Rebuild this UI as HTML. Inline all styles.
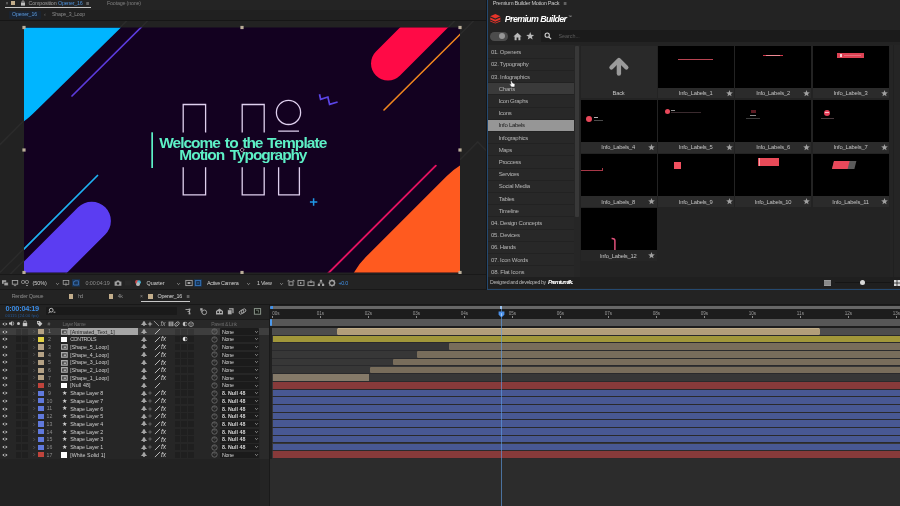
<!DOCTYPE html>
<html><head><meta charset="utf-8"><title>After Effects - Premium Builder</title>
<style>
html,body{margin:0;padding:0;background:#232323;}
body{width:900px;height:506px;overflow:hidden;position:relative;font-family:"Liberation Sans",sans-serif;}
#app{position:absolute;left:0;top:0;width:900px;height:506px;overflow:hidden;background:#232323;will-change:transform;}
#app div,#app span,#app svg{position:absolute;display:block;}
#app span{white-space:nowrap;}
</style></head><body><div id="app">
<div style="left:0px;top:0px;width:487px;height:9.5px;background:#242424;"></div>
<div style="left:0px;top:9.5px;width:487px;height:10.5px;background:#202020;"></div>
<div style="left:0px;top:19.5px;width:487px;height:1px;background:#161616;"></div>
<div style="left:0px;top:20.5px;width:487px;height:253.5px;background:#222222;"></div>
<span style="left:5.50px;top:0px;font-size:5px;line-height:6px;color:#8a8a8a;">×</span>
<div style="left:11.4px;top:0.8px;width:3.8px;height:3.9px;background:#c2ad8b;"></div>
<svg style="left:19.8px;top:-0.2px;" width="6" height="6" viewBox="0 0 6 6">
<rect x="1" y="2.6" width="4" height="3" fill="#bdbdbd"/><path d="M2 2.8V1.8a1 1 0 0 1 2 0V2.8" fill="none" stroke="#bdbdbd" stroke-width=".8"/>
</svg>
<span style="left:28.50px;top:0px;font-size:5.4px;line-height:7px;color:#9c9c9c;letter-spacing:-0.183px;">Composition</span>
<span style="left:58.00px;top:0px;font-size:5.4px;line-height:7px;color:#4d8fd6;letter-spacing:-0.280px;">Opener_16</span>
<span style="left:86.00px;top:0px;font-size:5.5px;line-height:7px;color:#9c9c9c;">≡</span>
<div style="left:4.7px;top:7.3px;width:86px;height:1.2px;background:#c8c8c8;"></div>
<span style="left:107.00px;top:0px;font-size:5.4px;line-height:7px;color:#7e7e7e;letter-spacing:-0.209px;">Footage (none)</span>
<div style="left:9px;top:10.5px;width:32px;height:8px;background:#1a2330;border-radius:1px;"></div>
<span style="left:12.00px;top:11px;font-size:5.2px;line-height:7px;color:#5c9be0;letter-spacing:-0.113px;">Opener_16</span>
<span style="left:44.00px;top:11px;font-size:5.5px;line-height:7px;color:#6a6a6a;">‹</span>
<span style="left:52.00px;top:11px;font-size:5.2px;line-height:7px;color:#8a8a8a;letter-spacing:-0.190px;">Shape_3_Loop</span>
<svg style="left:0px;top:20.5px;" width="487" height="253.5" viewBox="0 20.5 487 253.5">
<defs><clipPath id="cc"><rect x="24" y="27" width="436" height="245"/></clipPath></defs>
<g stroke="#2b2b2b" stroke-width="1.6" fill="none"><path d="M120 27l8-8M24 120l-26 26M141 27l7-7"/><path d="M448 27l8-8M460 34l14-14"/><path d="M24 248l-24 24M24 260l-24 24M67 272l-3 3"/><path d="M460 159.2L477.7 141.5L486.5 150.300"/></g>
<rect x="24" y="27" width="436" height="245" fill="#130120"/>
<g clip-path="url(#cc)">
<path d="M24 27H121L37 109.3Q28.500 117.800 24 120.800Z" fill="#00b5ff"/>
<path d="M141.5 26.5L72 95.5" stroke="#5b3bdb" stroke-width="1.7" stroke-linecap="round"/>
<path d="M388 63L448 3" stroke="#ff0a46" stroke-width="34" stroke-linecap="round"/>
<path d="M460.5 33.5L384 109.5" stroke="#f0861f" stroke-width="1.6" stroke-linecap="round"/>
<path d="M91.7 220.4L11.7 300.4" stroke="#5b3df2" stroke-width="38.4" stroke-linecap="round"/>
<path d="M97.5 175L23 249.5" stroke="#1fb2f2" stroke-width="1.7" stroke-linecap="round"/>
<path d="M435.8 165.2L328 273" stroke="#e0125f" stroke-width="1.9" stroke-linecap="round"/>
<path d="M353.4 273Q358.3 263.9 366 256.3L446.3 176Q454 168.3 461 164.4V273Z" fill="#ff5a1f"/>
<path d="M319.5 93.8L320.6 98.8L327.9 96.5L329.6 103.9L337.6 101.5" fill="none" stroke="#5b45e6" stroke-width="1.7" stroke-linejoin="miter"/>
<g fill="none" stroke="#dfd0ee" stroke-width="1.3"><path d="M183.2 132V104H205.6V132"/><path d="M183.2 166.8V194.4H205.6V166.8"/><path d="M242.2 132V104H264.2V132"/><path d="M242.2 166.8V194.4H264.2V166.8"/><circle cx="288.5" cy="111.9" r="12.1"/><path d="M278.2 130.7H299"/><path d="M278.6 166.8V194.4H299.4V166.8"/></g>
<path d="M313.6 197.8v7.4M309.9 201.5h7.4" stroke="#2098e6" stroke-width="1.5"/>
<rect x="151.3" y="131.8" width="1.7" height="35.7" fill="#5df0c6"/>
</g>
<rect x="22.4" y="25.4" width="3.2" height="3.2" fill="#b9ad98"/>
<rect x="240.4" y="25.4" width="3.2" height="3.2" fill="#b9ad98"/>
<rect x="458.4" y="25.4" width="3.2" height="3.2" fill="#b9ad98"/>
<rect x="22.4" y="147.9" width="3.2" height="3.2" fill="#b9ad98"/>
<rect x="458.4" y="147.9" width="3.2" height="3.2" fill="#b9ad98"/>
<rect x="22.4" y="270.4" width="3.2" height="3.2" fill="#b9ad98"/>
<rect x="240.4" y="270.4" width="3.2" height="3.2" fill="#b9ad98"/>
<rect x="458.4" y="270.4" width="3.2" height="3.2" fill="#b9ad98"/>
<path d="M242.1 147.3l2.200 2.200-2.200 2.200-2.200-2.200z" stroke="#d9bcc6" stroke-width=".8" fill="none"/>
</svg>
<span style="left:159.30px;top:133px;font-size:15.5px;line-height:19px;color:#5df0c6;letter-spacing:-1.038px;font-weight:bold;">Welcome</span>
<span style="left:224.70px;top:133px;font-size:15.5px;line-height:19px;color:#5df0c6;letter-spacing:-0.665px;font-weight:bold;">to</span>
<span style="left:242.50px;top:133px;font-size:15.5px;line-height:19px;color:#5df0c6;letter-spacing:-1.250px;font-weight:bold;">the</span>
<span style="left:266.90px;top:133px;font-size:15.5px;line-height:19px;color:#5df0c6;letter-spacing:-0.925px;font-weight:bold;">Template</span>
<span style="left:179.30px;top:145px;font-size:15.5px;line-height:19px;color:#5df0c6;letter-spacing:-0.981px;font-weight:bold;">Motion</span>
<span style="left:229.80px;top:145px;font-size:15.5px;line-height:19px;color:#5df0c6;letter-spacing:-1.095px;font-weight:bold;">Typography</span>
<div style="left:0px;top:274px;width:487px;height:16px;background:#232323;"></div>
<div style="left:0px;top:273.6px;width:487px;height:1px;background:#191919;"></div>
<svg style="left:1px;top:279.3px;" width="8" height="8" viewBox="0 0 8 8">
<rect x="1" y="1.2" width="4.2" height="3.6" fill="#a2a2a2"/><rect x="3" y="3.2" width="4.2" height="3.6" fill="#a2a2a2" stroke="#232323" stroke-width=".6"/>
</svg>
<svg style="left:10.7px;top:279.3px;" width="8" height="8" viewBox="0 0 8 8">
<rect x="1.3" y="1.5" width="5.4" height="3.7" fill="none" stroke="#a2a2a2" stroke-width=".9"/><path d="M2.8 6.6h2.4" stroke="#a2a2a2" stroke-width=".8"/>
</svg>
<svg style="left:20.6px;top:279.3px;" width="8" height="8" viewBox="0 0 8 8">
<rect x=".6" y="1.6" width="2.9" height="2.8" rx=".8" fill="none" stroke="#a2a2a2" stroke-width=".9"/><rect x="4.5" y="1.6" width="2.9" height="2.8" rx=".8" fill="none" stroke="#a2a2a2" stroke-width=".9"/><path d="M5 6.5h2" stroke="#a2a2a2" stroke-width=".8"/>
</svg>
<span style="left:32.40px;top:280px;font-size:5.4px;line-height:7px;color:#d2d2d2;letter-spacing:0.019px;">(50%)</span>
<svg style="left:54.7px;top:281.5px;" width="5" height="4" viewBox="0 0 5 4">
<path d="M1.2 1.3l1.3 1.3 1.3-1.3" fill="none" stroke="#9a9a9a" stroke-width=".9"/>
</svg>
<svg style="left:62px;top:279.3px;" width="8" height="8" viewBox="0 0 8 8">
<rect x="1.2" y="1.5" width="5.6" height="3.8" fill="none" stroke="#a2a2a2" stroke-width=".8"/><path d="M4 3.4v3.6" stroke="#a2a2a2" stroke-width=".7"/>
</svg>
<svg style="left:72px;top:279.3px;" width="8" height="8" viewBox="0 0 8 8">
<rect x="0" y=".2" width="8" height="7.4" fill="#1a3352"/><path d="M1.6 6V2.6h1.2V1.8h3.6v4.2z" fill="none" stroke="#3d78c2" stroke-width=".8"/>
</svg>
<span style="left:85.60px;top:280px;font-size:5.4px;line-height:7px;color:#8c8c8c;letter-spacing:-0.152px;">0:00:04:19</span>
<svg style="left:114.2px;top:279.3px;" width="8" height="8" viewBox="0 0 8 8">
<path d="M.6 2.4h1.6l.7-1h2.2l.7 1h1.6v4.4H.6z" fill="#a2a2a2"/><circle cx="4" cy="4.5" r="1.3" fill="#232323"/>
</svg>
<svg style="left:124px;top:279.3px;" width="8" height="8" viewBox="0 0 8 8">
<path d="M2 1.5v5M4 1.5v5M6 1.5v5" stroke="#303030" stroke-width=".9"/>
</svg>
<svg style="left:134.4px;top:279.3px;" width="8" height="8" viewBox="0 0 8 8">
<circle cx="3" cy="3" r="1.9" fill="#d04848"/><circle cx="5" cy="3.2" r="1.9" fill="#48b0d0"/><circle cx="4" cy="5.2" r="1.9" fill="#b8b8b8"/>
</svg>
<span style="left:146.60px;top:280px;font-size:5.4px;line-height:7px;color:#d2d2d2;letter-spacing:-0.072px;">Quarter</span>
<svg style="left:176.2px;top:281.5px;" width="5" height="4" viewBox="0 0 5 4">
<path d="M1.2 1.3l1.3 1.3 1.3-1.3" fill="none" stroke="#9a9a9a" stroke-width=".9"/>
</svg>
<svg style="left:184.5px;top:279.3px;" width="8" height="8" viewBox="0 0 8 8">
<rect x=".8" y="1.4" width="6.4" height="5.2" fill="none" stroke="#a2a2a2" stroke-width=".9"/><rect x="2.6" y="3" width="2.8" height="2" fill="#a2a2a2"/>
</svg>
<svg style="left:194.4px;top:279.3px;" width="8" height="8" viewBox="0 0 8 8">
<rect x="0" y=".2" width="8" height="7.6" fill="#18324f"/><rect x="1.3" y="1.6" width="5.4" height="4.8" fill="none" stroke="#3a7cc8" stroke-width=".8"/><path d="M2.5 2.8l3 2.4M5.5 2.8l-3 2.4" stroke="#2f65a5" stroke-width=".5"/>
</svg>
<span style="left:207.00px;top:280px;font-size:5.4px;line-height:7px;color:#d2d2d2;letter-spacing:-0.301px;">Active Camera</span>
<svg style="left:245.5px;top:281.5px;" width="5" height="4" viewBox="0 0 5 4">
<path d="M1.2 1.3l1.3 1.3 1.3-1.3" fill="none" stroke="#9a9a9a" stroke-width=".9"/>
</svg>
<span style="left:257.00px;top:280px;font-size:5.4px;line-height:7px;color:#d2d2d2;letter-spacing:-0.218px;">1 View</span>
<svg style="left:278.9px;top:281.5px;" width="5" height="4" viewBox="0 0 5 4">
<path d="M1.2 1.3l1.3 1.3 1.3-1.3" fill="none" stroke="#9a9a9a" stroke-width=".9"/>
</svg>
<svg style="left:287px;top:279.3px;" width="8" height="8" viewBox="0 0 8 8">
<path d="M1 1.4h1.4M5.6 1.4H7v1.2M1 1.4v1.2" stroke="#a2a2a2" stroke-width=".8" fill="none"/><rect x="2" y="2.8" width="4" height="3.4" fill="none" stroke="#a2a2a2" stroke-width=".9"/>
</svg>
<svg style="left:297px;top:279.3px;" width="8" height="8" viewBox="0 0 8 8">
<rect x="1" y="1.4" width="6" height="5" fill="none" stroke="#a2a2a2" stroke-width=".9"/><path d="M3 2.8v2.4l2.2-1.2z" fill="#a2a2a2"/>
</svg>
<svg style="left:306.8px;top:279.3px;" width="8" height="8" viewBox="0 0 8 8">
<rect x="1" y="3" width="6" height="3.6" fill="none" stroke="#a2a2a2" stroke-width=".9"/><path d="M4 .8v3M2.8 2.4L4 3.8l1.2-1.4" stroke="#a2a2a2" stroke-width=".8" fill="none"/>
</svg>
<svg style="left:316.6px;top:279.3px;" width="8" height="8" viewBox="0 0 8 8">
<rect x="2.9" y=".8" width="2.2" height="2" fill="#a2a2a2"/><rect x=".8" y="5" width="2.2" height="2" fill="#a2a2a2"/><rect x="5" y="5" width="2.2" height="2" fill="#a2a2a2"/><path d="M4 2.8v1.2M1.9 5V4h4.2v1" stroke="#a2a2a2" stroke-width=".7" fill="none"/>
</svg>
<svg style="left:328px;top:279.3px;" width="8" height="8" viewBox="0 0 8 8">
<circle cx="4" cy="4" r="2.5" fill="none" stroke="#a2a2a2" stroke-width="1.3"/><path d="M4 .5v1.2M4 6.3v1.2M.5 4h1.2M6.3 4h1.2M1.5 1.5l.9.9M5.6 5.6l.9.9M6.5 1.5l-.9.9M2.4 5.6l-.9.9" stroke="#a2a2a2" stroke-width=".9"/>
</svg>
<span style="left:338.50px;top:280px;font-size:5.4px;line-height:7px;color:#3f8de0;letter-spacing:-0.290px;">+0.0</span>
<div style="left:0px;top:289.3px;width:900px;height:1px;background:#181818;"></div>
<div style="left:0px;top:290.3px;width:900px;height:13.5px;background:#232323;"></div>
<div style="left:0px;top:303.6px;width:900px;height:1px;background:#181818;"></div>
<span style="left:11.70px;top:293px;font-size:5.4px;line-height:7px;color:#8a8a8a;letter-spacing:-0.319px;">Render Queue</span>
<div style="left:68.6px;top:294px;width:4.8px;height:5px;background:#c2ad8b;"></div>
<span style="left:78.00px;top:293px;font-size:5.4px;line-height:7px;color:#8a8a8a;letter-spacing:-0.703px;">hd</span>
<div style="left:108.6px;top:294px;width:4.8px;height:5px;background:#c2ad8b;"></div>
<span style="left:117.80px;top:293px;font-size:5.4px;line-height:7px;color:#8a8a8a;letter-spacing:-0.552px;">4k</span>
<span style="left:140.00px;top:293px;font-size:5px;line-height:6px;color:#8a8a8a;">×</span>
<div style="left:147.8px;top:294px;width:4.8px;height:5px;background:#c2ad8b;"></div>
<span style="left:157.50px;top:293px;font-size:5.4px;line-height:7px;color:#d6d6d6;letter-spacing:-0.280px;">Opener_16</span>
<span style="left:186.40px;top:293px;font-size:5.5px;line-height:7px;color:#9c9c9c;">≡</span>
<div style="left:141.2px;top:301.1px;width:49px;height:1px;background:#c8c8c8;"></div>
<div style="left:0px;top:304.6px;width:270px;height:15px;background:#232323;"></div>
<span style="left:5.50px;top:304px;font-size:7.4px;line-height:9px;color:#3b8be3;letter-spacing:-0.270px;font-weight:bold;">0:00:04:19</span>
<span style="left:5.30px;top:313px;font-size:4px;line-height:5px;color:#255a9c;letter-spacing:0.144px;">00115 (24.00 fps)</span>
<div style="left:46px;top:306.6px;width:131px;height:8px;background:#1a1a1a;border-radius:1px;"></div>
<svg style="left:47.5px;top:307px;" width="8" height="8" viewBox="0 0 8 8">
<circle cx="3.2" cy="3.2" r="1.9" fill="none" stroke="#c8c8c8" stroke-width=".9"/><path d="M1.9 4.6L.6 6.2M5.6 5.2h1.8" stroke="#c8c8c8" stroke-width=".9"/>
</svg>
<svg style="left:184.2px;top:306.5px;" width="9" height="9" viewBox="0 0 9 9">
<path d="M1.5 2.5h4M5.5 2.5v4M3.5 4.5h2" stroke="#a9a9a9" stroke-width=".9" fill="none"/><rect x="4.6" y="1.6" width="1.8" height="1.8" fill="#a9a9a9"/><rect x="4.6" y="5.6" width="1.8" height="1.8" fill="#a9a9a9"/>
</svg>
<svg style="left:198.9px;top:306.5px;" width="9" height="9" viewBox="0 0 9 9">
<rect x="1.2" y="1.2" width="2.4" height="2.4" fill="#a9a9a9"/><circle cx="5.3" cy="5.3" r="2.3" fill="none" stroke="#a9a9a9" stroke-width=".9"/><path d="M2.4 3.6v1.6h.8" stroke="#a9a9a9" stroke-width=".7" fill="none"/>
</svg>
<svg style="left:214.5px;top:306.5px;" width="9" height="9" viewBox="0 0 9 9">
<path d="M1 4L4.5 1.4 8 4v3.4H1z" fill="#a9a9a9"/><rect x="2.2" y="4.4" width="1.8" height="1.6" fill="#232323"/><rect x="5" y="4.4" width="1.8" height="1.6" fill="#232323"/>
</svg>
<svg style="left:226.1px;top:306.5px;" width="9" height="9" viewBox="0 0 9 9">
<rect x="3" y="1.2" width="4.6" height="5" fill="#a9a9a9"/><rect x="1.4" y="2.8" width="4.6" height="5" fill="#a9a9a9" stroke="#232323" stroke-width=".7"/>
</svg>
<svg style="left:238.3px;top:306.5px;" width="9" height="9" viewBox="0 0 9 9">
<ellipse cx="3.5" cy="5" rx="2.6" ry="1.7" transform="rotate(-35 3.5 5)" fill="none" stroke="#a9a9a9" stroke-width=".9"/><ellipse cx="5.5" cy="4" rx="2.6" ry="1.7" transform="rotate(-35 5.5 4)" fill="none" stroke="#a9a9a9" stroke-width=".9"/>
</svg>
<svg style="left:253.4px;top:306.5px;" width="9" height="9" viewBox="0 0 9 9">
<rect x="1.4" y="1.6" width="6.2" height="5.6" fill="#161a16" stroke="#8a948a" stroke-width="1"/><path d="M3 3.2h2.4v2.4" stroke="#8a948a" stroke-width=".7" fill="none"/>
</svg>
<div style="left:0px;top:319.4px;width:270px;height:1px;background:#1b1b1b;"></div>
<div style="left:0px;top:320.2px;width:270px;height:7.6px;background:#282828;"></div>
<svg style="left:1.8px;top:321.7px;" width="5.8" height="4.2" viewBox="0 0 7 5">
<path d="M.3 2.5Q3.5-.6 6.7 2.5Q3.5 5.6 .3 2.5z" fill="#c4c4c4"/><circle cx="3.5" cy="2.5" r="1.2" fill="#262626"/>
</svg>
<svg style="left:8.2px;top:320.3px;" width="7" height="7" viewBox="0 0 7 7">
<path d="M1 2.6h1.4L4.2 1v5L2.4 4.4H1z" fill="#c4c4c4"/><path d="M5 1.6q1.4 1.9 0 3.8" stroke="#c4c4c4" stroke-width=".7" fill="none"/>
</svg>
<div style="left:16.7px;top:322.3px;width:3px;height:3px;border-radius:2px;background:#c4c4c4"></div>
<svg style="left:22px;top:320.3px;" width="6" height="7" viewBox="0 0 6 7">
<rect x=".8" y="3" width="4.4" height="3.2" fill="#c4c4c4"/><path d="M1.8 3.2V2a1.2 1.2 0 0 1 2.4 0V3.2" fill="none" stroke="#c4c4c4" stroke-width=".8"/>
</svg>
<svg style="left:36px;top:320.3px;" width="7" height="7" viewBox="0 0 7 7">
<path d="M1 1h2.8L6.4 3.8 3.8 6.4 1 3.6z" fill="#c4c4c4"/><circle cx="2.3" cy="2.3" r=".6" fill="#282828"/>
</svg>
<span style="left:47.40px;top:321px;font-size:5px;line-height:6px;color:#7a7a7a;">#</span>
<span style="left:62.60px;top:321px;font-size:5px;line-height:6px;color:#6a6a6a;letter-spacing:-0.463px;">Layer Name</span>
<svg style="left:140.6px;top:321.2px;" width="6" height="5.2" viewBox="0 0 6 5.2">
<path d="M3 .3q1.3 0 1.3 1.4 0 .8 1.4 1.6v.6H.3v-.6q1.4-.8 1.4-1.6Q1.7.3 3 .3z" fill="#a6a6a6"/><path d="M2 4.5h2" stroke="#a6a6a6" stroke-width=".8"/>
</svg>
<svg style="left:147.2px;top:320.8px;" width="6" height="6" viewBox="0 0 6 6">
<path d="M3 .3l.8 1.9 1.9.8-1.9.8L3 5.7l-.8-1.9L.3 3l1.9-.8z" fill="#9a9a9a"/>
</svg>
<svg style="left:153.3px;top:320.3px;" width="7" height="7" viewBox="0 0 7 7">
<path d="M.9 .9L6.1 6.1" stroke="#9a9a9a" stroke-width=".9"/>
</svg>
<span style="left:160.50px;top:320px;font-size:6.6px;line-height:8px;color:#a5a5a5;font-style:italic;font-family:"Liberation Serif",serif;">fx</span>
<svg style="left:167.6px;top:320.8px;" width="6" height="6" viewBox="0 0 6 6">
<rect x=".6" y=".6" width="4.8" height="4.6" fill="#a8a8a8"/><path d="M2.2 .6v4.6M3.8 .6v4.6" stroke="#282828" stroke-width=".5"/>
</svg>
<svg style="left:174.3px;top:320.8px;" width="6" height="6" viewBox="0 0 6 6">
<ellipse cx="3" cy="3" rx="2.6" ry="1.6" transform="rotate(-40 3 3)" fill="none" stroke="#a8a8a8" stroke-width=".9"/><path d="M1.8 4.4L4.2 1.6" stroke="#a8a8a8" stroke-width=".5"/>
</svg>
<svg style="left:181.5px;top:320.8px;" width="6" height="6" viewBox="0 0 6 6">
<circle cx="3" cy="3" r="2.3" fill="#c4c4c4"/><path d="M3.2 1.2a1.8 1.8 0 0 1 0 3.6z" fill="#262626"/>
</svg>
<svg style="left:188.3px;top:320.8px;" width="6" height="6" viewBox="0 0 6 6">
<path d="M.8 2L3 .8 5.200 2v2.600L3 5.600 .8 4.600z" fill="none" stroke="#a8a8a8" stroke-width=".8"/><path d="M.8 2l2.200 1L5.200 2M3 3v2.600" stroke="#a8a8a8" stroke-width=".5" fill="none"/>
</svg>
<span style="left:211.20px;top:321px;font-size:5px;line-height:6px;color:#6a6a6a;letter-spacing:-0.340px;">Parent &amp; Link</span>
<div style="left:0px;top:327.8px;width:270px;height:131px;background:#262626;"></div>
<div style="left:260.4px;top:320.2px;width:8.6px;height:138.6px;background:#2a2a2a;"></div>
<div style="left:269px;top:304.6px;width:1.4px;height:202px;background:#1a1a1a;"></div>
<div style="left:0px;top:458.8px;width:260.4px;height:47.2px;background:#222222;"></div>
<div style="left:260.4px;top:458.8px;width:8.6px;height:47.2px;background:#242424;"></div>
<div style="left:0px;top:328.05px;width:269px;height:7.1px;background:#3e3e3e;"></div>
<div style="left:15.7px;top:328.55px;width:5.5px;height:6.1px;background:#343434;"></div>
<div style="left:22.3px;top:328.55px;width:5.5px;height:6.1px;background:#343434;"></div>
<div style="left:174.7px;top:328.55px;width:5.6px;height:6.1px;background:#353535;"></div>
<div style="left:181.4px;top:328.55px;width:5.6px;height:6.1px;background:#353535;"></div>
<div style="left:188.1px;top:328.55px;width:5.6px;height:6.1px;background:#353535;"></div>
<svg style="left:1.8px;top:329.5px;" width="5.8" height="4.2" viewBox="0 0 7 5">
<path d="M.3 2.5Q3.5-.6 6.7 2.5Q3.5 5.6 .3 2.5z" fill="#c6c6c6"/><circle cx="3.5" cy="2.5" r="1.2" fill="#262626"/>
</svg>
<svg style="left:32.4px;top:329.1px;" width="4" height="5" viewBox="0 0 4 5">
<path d="M1.5 1.2L2.7 2.5 1.5 3.8" fill="none" stroke="#636363" stroke-width=".8"/>
</svg>
<div style="left:38.2px;top:329px;width:5.7px;height:5.2px;background:#b5a285;"></div>
<span style="left:47.95px;top:328px;font-size:5.2px;line-height:7px;color:#8c8c8c;">1</span>
<svg style="left:61px;top:328.7px;" width="7" height="6" viewBox="0 0 7 6">
<rect x="0" y="0" width="6.8" height="5.8" fill="#a9a9a9"/><rect x="1.2" y="1.4" width="4.4" height="3.2" fill="#3a3a3a"/><rect x="2.6" y="2.4" width="2.4" height="1.8" fill="#a9a9a9"/>
</svg>
<div style="left:68.4px;top:328.25px;width:69.8px;height:6.7px;background:#a6a6a6;"></div>
<span style="left:70.20px;top:329px;font-size:5.3px;line-height:7px;color:#1e1e1e;letter-spacing:0.035px;">[Animated_Text_1]</span>
<svg style="left:140.6px;top:329px;" width="6" height="5.2" viewBox="0 0 6 5.2">
<path d="M3 .3q1.3 0 1.3 1.4 0 .8 1.4 1.6v.6H.3v-.6q1.4-.8 1.4-1.6Q1.7.3 3 .3z" fill="#a6a6a6"/><path d="M2 4.5h2" stroke="#a6a6a6" stroke-width=".8"/>
</svg>
<svg style="left:153.7px;top:328.1px;" width="7" height="7" viewBox="0 0 7 7">
<path d="M.9 6.1L6.1 .9" stroke="#c9c9c9" stroke-width=".9"/>
</svg>
<svg style="left:210.8px;top:328.1px;" width="7" height="7" viewBox="0 0 7 7">
<circle cx="3.5" cy="3.5" r="2.7" fill="none" stroke="#6e6e6e" stroke-width=".8"/><path d="M3.5 3.5q1.2-.9 .4-1.7-1.4-.6-2 .9" fill="none" stroke="#6e6e6e" stroke-width=".6"/>
</svg>
<div style="left:219.8px;top:328.45px;width:39.6px;height:6.3px;background:#1b1b1b;border-radius:1px;"></div>
<span style="left:222.00px;top:329px;font-size:5.3px;line-height:7px;color:#d4d4d4;letter-spacing:-0.218px;">None</span>
<svg style="left:253.5px;top:329.6px;" width="5" height="4" viewBox="0 0 5 4">
<path d="M1.2 1.3l1.3 1.3 1.3-1.3" fill="none" stroke="#a0a0a0" stroke-width=".9"/>
</svg>
<div style="left:15.7px;top:336.25px;width:5.5px;height:6.1px;background:#1f1f1f;"></div>
<div style="left:22.3px;top:336.25px;width:5.5px;height:6.1px;background:#1f1f1f;"></div>
<div style="left:174.7px;top:336.25px;width:5.6px;height:6.1px;background:#1f1f1f;"></div>
<div style="left:181.4px;top:336.25px;width:5.6px;height:6.1px;background:#1f1f1f;"></div>
<div style="left:188.1px;top:336.25px;width:5.6px;height:6.1px;background:#1f1f1f;"></div>
<svg style="left:1.8px;top:337.2px;" width="5.8" height="4.2" viewBox="0 0 7 5">
<path d="M.3 2.5Q3.5-.6 6.7 2.5Q3.5 5.6 .3 2.5z" fill="#c6c6c6"/><circle cx="3.5" cy="2.5" r="1.2" fill="#262626"/>
</svg>
<svg style="left:32.4px;top:336.8px;" width="4" height="5" viewBox="0 0 4 5">
<path d="M1.5 1.2L2.7 2.5 1.5 3.8" fill="none" stroke="#636363" stroke-width=".8"/>
</svg>
<div style="left:38.2px;top:336.7px;width:5.7px;height:5.2px;background:#e2d244;"></div>
<span style="left:47.95px;top:336px;font-size:5.2px;line-height:7px;color:#8c8c8c;">2</span>
<div style="left:61.2px;top:336.5px;width:6.2px;height:5.6px;background:#ffffff;"></div>
<span style="left:70.20px;top:336px;font-size:5.3px;line-height:7px;color:#cfcfcf;letter-spacing:-0.431px;">CONTROLS</span>
<svg style="left:140.6px;top:336.7px;" width="6" height="5.2" viewBox="0 0 6 5.2">
<path d="M3 .3q1.3 0 1.3 1.4 0 .8 1.4 1.6v.6H.3v-.6q1.4-.8 1.4-1.6Q1.7.3 3 .3z" fill="#a6a6a6"/><path d="M2 4.5h2" stroke="#a6a6a6" stroke-width=".8"/>
</svg>
<svg style="left:153.7px;top:335.8px;" width="7" height="7" viewBox="0 0 7 7">
<path d="M.9 6.1L6.1 .9" stroke="#c9c9c9" stroke-width=".9"/>
</svg>
<span style="left:161.00px;top:335px;font-size:6.6px;line-height:8px;color:#d0d0d0;font-style:italic;font-family:"Liberation Serif",serif;">fx</span>
<svg style="left:181.5px;top:336.3px;" width="6" height="6" viewBox="0 0 6 6">
<circle cx="3" cy="3" r="2.3" fill="#e8e8e8"/><path d="M3.2 1.2a1.8 1.8 0 0 1 0 3.6z" fill="#262626"/>
</svg>
<svg style="left:210.8px;top:335.8px;" width="7" height="7" viewBox="0 0 7 7">
<circle cx="3.5" cy="3.5" r="2.7" fill="none" stroke="#6e6e6e" stroke-width=".8"/><path d="M3.5 3.5q1.2-.9 .4-1.7-1.4-.6-2 .9" fill="none" stroke="#6e6e6e" stroke-width=".6"/>
</svg>
<div style="left:219.8px;top:336.15px;width:39.6px;height:6.3px;background:#1b1b1b;border-radius:1px;"></div>
<span style="left:222.00px;top:336px;font-size:5.3px;line-height:7px;color:#d4d4d4;letter-spacing:-0.218px;">None</span>
<svg style="left:253.5px;top:337.3px;" width="5" height="4" viewBox="0 0 5 4">
<path d="M1.2 1.3l1.3 1.3 1.3-1.3" fill="none" stroke="#a0a0a0" stroke-width=".9"/>
</svg>
<div style="left:15.7px;top:343.95px;width:5.5px;height:6.1px;background:#1f1f1f;"></div>
<div style="left:22.3px;top:343.95px;width:5.5px;height:6.1px;background:#1f1f1f;"></div>
<div style="left:174.7px;top:343.95px;width:5.6px;height:6.1px;background:#1f1f1f;"></div>
<div style="left:181.4px;top:343.95px;width:5.6px;height:6.1px;background:#1f1f1f;"></div>
<div style="left:188.1px;top:343.95px;width:5.6px;height:6.1px;background:#1f1f1f;"></div>
<svg style="left:1.8px;top:344.9px;" width="5.8" height="4.2" viewBox="0 0 7 5">
<path d="M.3 2.5Q3.5-.6 6.7 2.5Q3.5 5.6 .3 2.5z" fill="#c6c6c6"/><circle cx="3.5" cy="2.5" r="1.2" fill="#262626"/>
</svg>
<svg style="left:32.4px;top:344.5px;" width="4" height="5" viewBox="0 0 4 5">
<path d="M1.5 1.2L2.7 2.5 1.5 3.8" fill="none" stroke="#636363" stroke-width=".8"/>
</svg>
<div style="left:38.2px;top:344.4px;width:5.7px;height:5.2px;background:#b5a285;"></div>
<span style="left:47.95px;top:344px;font-size:5.2px;line-height:7px;color:#8c8c8c;">3</span>
<svg style="left:61px;top:344.1px;" width="7" height="6" viewBox="0 0 7 6">
<rect x="0" y="0" width="6.8" height="5.8" fill="#a9a9a9"/><rect x="1.2" y="1.4" width="4.4" height="3.2" fill="#3a3a3a"/><rect x="2.6" y="2.4" width="2.4" height="1.8" fill="#a9a9a9"/>
</svg>
<span style="left:70.20px;top:344px;font-size:5.3px;line-height:7px;color:#cfcfcf;letter-spacing:-0.029px;">[Shape_5_Loop]</span>
<svg style="left:140.6px;top:344.4px;" width="6" height="5.2" viewBox="0 0 6 5.2">
<path d="M3 .3q1.3 0 1.3 1.4 0 .8 1.4 1.6v.6H.3v-.6q1.4-.8 1.4-1.6Q1.7.3 3 .3z" fill="#a6a6a6"/><path d="M2 4.5h2" stroke="#a6a6a6" stroke-width=".8"/>
</svg>
<svg style="left:153.7px;top:343.5px;" width="7" height="7" viewBox="0 0 7 7">
<path d="M.9 6.1L6.1 .9" stroke="#c9c9c9" stroke-width=".9"/>
</svg>
<span style="left:161.00px;top:343px;font-size:6.6px;line-height:8px;color:#d0d0d0;font-style:italic;font-family:"Liberation Serif",serif;">fx</span>
<svg style="left:210.8px;top:343.5px;" width="7" height="7" viewBox="0 0 7 7">
<circle cx="3.5" cy="3.5" r="2.7" fill="none" stroke="#6e6e6e" stroke-width=".8"/><path d="M3.5 3.5q1.2-.9 .4-1.7-1.4-.6-2 .9" fill="none" stroke="#6e6e6e" stroke-width=".6"/>
</svg>
<div style="left:219.8px;top:343.85px;width:39.6px;height:6.3px;background:#1b1b1b;border-radius:1px;"></div>
<span style="left:222.00px;top:344px;font-size:5.3px;line-height:7px;color:#d4d4d4;letter-spacing:-0.218px;">None</span>
<svg style="left:253.5px;top:345px;" width="5" height="4" viewBox="0 0 5 4">
<path d="M1.2 1.3l1.3 1.3 1.3-1.3" fill="none" stroke="#a0a0a0" stroke-width=".9"/>
</svg>
<div style="left:15.7px;top:351.65px;width:5.5px;height:6.1px;background:#1f1f1f;"></div>
<div style="left:22.3px;top:351.65px;width:5.5px;height:6.1px;background:#1f1f1f;"></div>
<div style="left:174.7px;top:351.65px;width:5.6px;height:6.1px;background:#1f1f1f;"></div>
<div style="left:181.4px;top:351.65px;width:5.6px;height:6.1px;background:#1f1f1f;"></div>
<div style="left:188.1px;top:351.65px;width:5.6px;height:6.1px;background:#1f1f1f;"></div>
<svg style="left:1.8px;top:352.6px;" width="5.8" height="4.2" viewBox="0 0 7 5">
<path d="M.3 2.5Q3.5-.6 6.7 2.5Q3.5 5.6 .3 2.5z" fill="#c6c6c6"/><circle cx="3.5" cy="2.5" r="1.2" fill="#262626"/>
</svg>
<svg style="left:32.4px;top:352.2px;" width="4" height="5" viewBox="0 0 4 5">
<path d="M1.5 1.2L2.7 2.5 1.5 3.8" fill="none" stroke="#636363" stroke-width=".8"/>
</svg>
<div style="left:38.2px;top:352.1px;width:5.7px;height:5.2px;background:#b5a285;"></div>
<span style="left:47.95px;top:352px;font-size:5.2px;line-height:7px;color:#8c8c8c;">4</span>
<svg style="left:61px;top:351.8px;" width="7" height="6" viewBox="0 0 7 6">
<rect x="0" y="0" width="6.8" height="5.8" fill="#a9a9a9"/><rect x="1.2" y="1.4" width="4.4" height="3.2" fill="#3a3a3a"/><rect x="2.6" y="2.4" width="2.4" height="1.8" fill="#a9a9a9"/>
</svg>
<span style="left:70.20px;top:352px;font-size:5.3px;line-height:7px;color:#cfcfcf;letter-spacing:-0.029px;">[Shape_4_Loop]</span>
<svg style="left:140.6px;top:352.1px;" width="6" height="5.2" viewBox="0 0 6 5.2">
<path d="M3 .3q1.3 0 1.3 1.4 0 .8 1.4 1.6v.6H.3v-.6q1.4-.8 1.4-1.6Q1.7.3 3 .3z" fill="#a6a6a6"/><path d="M2 4.5h2" stroke="#a6a6a6" stroke-width=".8"/>
</svg>
<svg style="left:153.7px;top:351.2px;" width="7" height="7" viewBox="0 0 7 7">
<path d="M.9 6.1L6.1 .9" stroke="#c9c9c9" stroke-width=".9"/>
</svg>
<span style="left:161.00px;top:351px;font-size:6.6px;line-height:8px;color:#d0d0d0;font-style:italic;font-family:"Liberation Serif",serif;">fx</span>
<svg style="left:210.8px;top:351.2px;" width="7" height="7" viewBox="0 0 7 7">
<circle cx="3.5" cy="3.5" r="2.7" fill="none" stroke="#6e6e6e" stroke-width=".8"/><path d="M3.5 3.5q1.2-.9 .4-1.7-1.4-.6-2 .9" fill="none" stroke="#6e6e6e" stroke-width=".6"/>
</svg>
<div style="left:219.8px;top:351.55px;width:39.6px;height:6.3px;background:#1b1b1b;border-radius:1px;"></div>
<span style="left:222.00px;top:352px;font-size:5.3px;line-height:7px;color:#d4d4d4;letter-spacing:-0.218px;">None</span>
<svg style="left:253.5px;top:352.7px;" width="5" height="4" viewBox="0 0 5 4">
<path d="M1.2 1.3l1.3 1.3 1.3-1.3" fill="none" stroke="#a0a0a0" stroke-width=".9"/>
</svg>
<div style="left:15.7px;top:359.35px;width:5.5px;height:6.1px;background:#1f1f1f;"></div>
<div style="left:22.3px;top:359.35px;width:5.5px;height:6.1px;background:#1f1f1f;"></div>
<div style="left:174.7px;top:359.35px;width:5.6px;height:6.1px;background:#1f1f1f;"></div>
<div style="left:181.4px;top:359.35px;width:5.6px;height:6.1px;background:#1f1f1f;"></div>
<div style="left:188.1px;top:359.35px;width:5.6px;height:6.1px;background:#1f1f1f;"></div>
<svg style="left:1.8px;top:360.3px;" width="5.8" height="4.2" viewBox="0 0 7 5">
<path d="M.3 2.5Q3.5-.6 6.7 2.5Q3.5 5.6 .3 2.5z" fill="#c6c6c6"/><circle cx="3.5" cy="2.5" r="1.2" fill="#262626"/>
</svg>
<svg style="left:32.4px;top:359.9px;" width="4" height="5" viewBox="0 0 4 5">
<path d="M1.5 1.2L2.7 2.5 1.5 3.8" fill="none" stroke="#636363" stroke-width=".8"/>
</svg>
<div style="left:38.2px;top:359.8px;width:5.7px;height:5.2px;background:#b5a285;"></div>
<span style="left:47.95px;top:359px;font-size:5.2px;line-height:7px;color:#8c8c8c;">5</span>
<svg style="left:61px;top:359.5px;" width="7" height="6" viewBox="0 0 7 6">
<rect x="0" y="0" width="6.8" height="5.8" fill="#a9a9a9"/><rect x="1.2" y="1.4" width="4.4" height="3.2" fill="#3a3a3a"/><rect x="2.6" y="2.4" width="2.4" height="1.8" fill="#a9a9a9"/>
</svg>
<span style="left:70.20px;top:359px;font-size:5.3px;line-height:7px;color:#cfcfcf;letter-spacing:-0.029px;">[Shape_3_Loop]</span>
<svg style="left:140.6px;top:359.8px;" width="6" height="5.2" viewBox="0 0 6 5.2">
<path d="M3 .3q1.3 0 1.3 1.4 0 .8 1.4 1.6v.6H.3v-.6q1.4-.8 1.4-1.6Q1.7.3 3 .3z" fill="#a6a6a6"/><path d="M2 4.5h2" stroke="#a6a6a6" stroke-width=".8"/>
</svg>
<svg style="left:153.7px;top:358.9px;" width="7" height="7" viewBox="0 0 7 7">
<path d="M.9 6.1L6.1 .9" stroke="#c9c9c9" stroke-width=".9"/>
</svg>
<span style="left:161.00px;top:359px;font-size:6.6px;line-height:8px;color:#d0d0d0;font-style:italic;font-family:"Liberation Serif",serif;">fx</span>
<svg style="left:210.8px;top:358.9px;" width="7" height="7" viewBox="0 0 7 7">
<circle cx="3.5" cy="3.5" r="2.7" fill="none" stroke="#6e6e6e" stroke-width=".8"/><path d="M3.5 3.5q1.2-.9 .4-1.7-1.4-.6-2 .9" fill="none" stroke="#6e6e6e" stroke-width=".6"/>
</svg>
<div style="left:219.8px;top:359.25px;width:39.6px;height:6.3px;background:#1b1b1b;border-radius:1px;"></div>
<span style="left:222.00px;top:359px;font-size:5.3px;line-height:7px;color:#d4d4d4;letter-spacing:-0.218px;">None</span>
<svg style="left:253.5px;top:360.4px;" width="5" height="4" viewBox="0 0 5 4">
<path d="M1.2 1.3l1.3 1.3 1.3-1.3" fill="none" stroke="#a0a0a0" stroke-width=".9"/>
</svg>
<div style="left:15.7px;top:367.05px;width:5.5px;height:6.1px;background:#1f1f1f;"></div>
<div style="left:22.3px;top:367.05px;width:5.5px;height:6.1px;background:#1f1f1f;"></div>
<div style="left:174.7px;top:367.05px;width:5.6px;height:6.1px;background:#1f1f1f;"></div>
<div style="left:181.4px;top:367.05px;width:5.6px;height:6.1px;background:#1f1f1f;"></div>
<div style="left:188.1px;top:367.05px;width:5.6px;height:6.1px;background:#1f1f1f;"></div>
<svg style="left:1.8px;top:368px;" width="5.8" height="4.2" viewBox="0 0 7 5">
<path d="M.3 2.5Q3.5-.6 6.7 2.5Q3.5 5.6 .3 2.5z" fill="#c6c6c6"/><circle cx="3.5" cy="2.5" r="1.2" fill="#262626"/>
</svg>
<svg style="left:32.4px;top:367.6px;" width="4" height="5" viewBox="0 0 4 5">
<path d="M1.5 1.2L2.7 2.5 1.5 3.8" fill="none" stroke="#636363" stroke-width=".8"/>
</svg>
<div style="left:38.2px;top:367.5px;width:5.7px;height:5.2px;background:#b5a285;"></div>
<span style="left:47.95px;top:367px;font-size:5.2px;line-height:7px;color:#8c8c8c;">6</span>
<svg style="left:61px;top:367.2px;" width="7" height="6" viewBox="0 0 7 6">
<rect x="0" y="0" width="6.8" height="5.8" fill="#a9a9a9"/><rect x="1.2" y="1.4" width="4.4" height="3.2" fill="#3a3a3a"/><rect x="2.6" y="2.4" width="2.4" height="1.8" fill="#a9a9a9"/>
</svg>
<span style="left:70.20px;top:367px;font-size:5.3px;line-height:7px;color:#cfcfcf;letter-spacing:-0.029px;">[Shape_2_Loop]</span>
<svg style="left:140.6px;top:367.5px;" width="6" height="5.2" viewBox="0 0 6 5.2">
<path d="M3 .3q1.3 0 1.3 1.4 0 .8 1.4 1.6v.6H.3v-.6q1.4-.8 1.4-1.6Q1.7.3 3 .3z" fill="#a6a6a6"/><path d="M2 4.5h2" stroke="#a6a6a6" stroke-width=".8"/>
</svg>
<svg style="left:153.7px;top:366.6px;" width="7" height="7" viewBox="0 0 7 7">
<path d="M.9 6.1L6.1 .9" stroke="#c9c9c9" stroke-width=".9"/>
</svg>
<span style="left:161.00px;top:366px;font-size:6.6px;line-height:8px;color:#d0d0d0;font-style:italic;font-family:"Liberation Serif",serif;">fx</span>
<svg style="left:210.8px;top:366.6px;" width="7" height="7" viewBox="0 0 7 7">
<circle cx="3.5" cy="3.5" r="2.7" fill="none" stroke="#6e6e6e" stroke-width=".8"/><path d="M3.5 3.5q1.2-.9 .4-1.7-1.4-.6-2 .9" fill="none" stroke="#6e6e6e" stroke-width=".6"/>
</svg>
<div style="left:219.8px;top:366.95px;width:39.6px;height:6.3px;background:#1b1b1b;border-radius:1px;"></div>
<span style="left:222.00px;top:367px;font-size:5.3px;line-height:7px;color:#d4d4d4;letter-spacing:-0.218px;">None</span>
<svg style="left:253.5px;top:368.1px;" width="5" height="4" viewBox="0 0 5 4">
<path d="M1.2 1.3l1.3 1.3 1.3-1.3" fill="none" stroke="#a0a0a0" stroke-width=".9"/>
</svg>
<div style="left:15.7px;top:374.75px;width:5.5px;height:6.1px;background:#1f1f1f;"></div>
<div style="left:22.3px;top:374.75px;width:5.5px;height:6.1px;background:#1f1f1f;"></div>
<div style="left:174.7px;top:374.75px;width:5.6px;height:6.1px;background:#1f1f1f;"></div>
<div style="left:181.4px;top:374.75px;width:5.6px;height:6.1px;background:#1f1f1f;"></div>
<div style="left:188.1px;top:374.75px;width:5.6px;height:6.1px;background:#1f1f1f;"></div>
<svg style="left:1.8px;top:375.7px;" width="5.8" height="4.2" viewBox="0 0 7 5">
<path d="M.3 2.5Q3.5-.6 6.7 2.5Q3.5 5.6 .3 2.5z" fill="#c6c6c6"/><circle cx="3.5" cy="2.5" r="1.2" fill="#262626"/>
</svg>
<svg style="left:32.4px;top:375.3px;" width="4" height="5" viewBox="0 0 4 5">
<path d="M1.5 1.2L2.7 2.5 1.5 3.8" fill="none" stroke="#636363" stroke-width=".8"/>
</svg>
<div style="left:38.2px;top:375.2px;width:5.7px;height:5.2px;background:#b5a285;"></div>
<span style="left:47.95px;top:375px;font-size:5.2px;line-height:7px;color:#8c8c8c;">7</span>
<svg style="left:61px;top:374.9px;" width="7" height="6" viewBox="0 0 7 6">
<rect x="0" y="0" width="6.8" height="5.8" fill="#a9a9a9"/><rect x="1.2" y="1.4" width="4.4" height="3.2" fill="#3a3a3a"/><rect x="2.6" y="2.4" width="2.4" height="1.8" fill="#a9a9a9"/>
</svg>
<span style="left:70.20px;top:375px;font-size:5.3px;line-height:7px;color:#cfcfcf;letter-spacing:-0.029px;">[Shape_1_Loop]</span>
<svg style="left:140.6px;top:375.2px;" width="6" height="5.2" viewBox="0 0 6 5.2">
<path d="M3 .3q1.3 0 1.3 1.4 0 .8 1.4 1.6v.6H.3v-.6q1.4-.8 1.4-1.6Q1.7.3 3 .3z" fill="#a6a6a6"/><path d="M2 4.5h2" stroke="#a6a6a6" stroke-width=".8"/>
</svg>
<svg style="left:153.7px;top:374.3px;" width="7" height="7" viewBox="0 0 7 7">
<path d="M.9 6.1L6.1 .9" stroke="#c9c9c9" stroke-width=".9"/>
</svg>
<span style="left:161.00px;top:374px;font-size:6.6px;line-height:8px;color:#d0d0d0;font-style:italic;font-family:"Liberation Serif",serif;">fx</span>
<svg style="left:210.8px;top:374.3px;" width="7" height="7" viewBox="0 0 7 7">
<circle cx="3.5" cy="3.5" r="2.7" fill="none" stroke="#6e6e6e" stroke-width=".8"/><path d="M3.5 3.5q1.2-.9 .4-1.7-1.4-.6-2 .9" fill="none" stroke="#6e6e6e" stroke-width=".6"/>
</svg>
<div style="left:219.8px;top:374.65px;width:39.6px;height:6.3px;background:#1b1b1b;border-radius:1px;"></div>
<span style="left:222.00px;top:375px;font-size:5.3px;line-height:7px;color:#d4d4d4;letter-spacing:-0.218px;">None</span>
<svg style="left:253.5px;top:375.8px;" width="5" height="4" viewBox="0 0 5 4">
<path d="M1.2 1.3l1.3 1.3 1.3-1.3" fill="none" stroke="#a0a0a0" stroke-width=".9"/>
</svg>
<div style="left:15.7px;top:382.45px;width:5.5px;height:6.1px;background:#1f1f1f;"></div>
<div style="left:22.3px;top:382.45px;width:5.5px;height:6.1px;background:#1f1f1f;"></div>
<div style="left:174.7px;top:382.45px;width:5.6px;height:6.1px;background:#1f1f1f;"></div>
<div style="left:181.4px;top:382.45px;width:5.6px;height:6.1px;background:#1f1f1f;"></div>
<div style="left:188.1px;top:382.45px;width:5.6px;height:6.1px;background:#1f1f1f;"></div>
<svg style="left:1.8px;top:383.4px;" width="5.8" height="4.2" viewBox="0 0 7 5">
<path d="M.3 2.5Q3.5-.6 6.7 2.5Q3.5 5.6 .3 2.5z" fill="#c6c6c6"/><circle cx="3.5" cy="2.5" r="1.2" fill="#262626"/>
</svg>
<svg style="left:32.4px;top:383px;" width="4" height="5" viewBox="0 0 4 5">
<path d="M1.5 1.2L2.7 2.5 1.5 3.8" fill="none" stroke="#636363" stroke-width=".8"/>
</svg>
<div style="left:38.2px;top:382.9px;width:5.7px;height:5.2px;background:#c0443c;"></div>
<span style="left:47.95px;top:382px;font-size:5.2px;line-height:7px;color:#8c8c8c;">8</span>
<div style="left:61.2px;top:382.7px;width:6.2px;height:5.6px;background:#ffffff;"></div>
<span style="left:70.20px;top:382px;font-size:5.3px;line-height:7px;color:#cfcfcf;letter-spacing:0.117px;">[Null 48]</span>
<svg style="left:140.6px;top:382.9px;" width="6" height="5.2" viewBox="0 0 6 5.2">
<path d="M3 .3q1.3 0 1.3 1.4 0 .8 1.4 1.6v.6H.3v-.6q1.4-.8 1.4-1.6Q1.7.3 3 .3z" fill="#a6a6a6"/><path d="M2 4.5h2" stroke="#a6a6a6" stroke-width=".8"/>
</svg>
<svg style="left:153.7px;top:382px;" width="7" height="7" viewBox="0 0 7 7">
<path d="M.9 6.1L6.1 .9" stroke="#c9c9c9" stroke-width=".9"/>
</svg>
<svg style="left:210.8px;top:382px;" width="7" height="7" viewBox="0 0 7 7">
<circle cx="3.5" cy="3.5" r="2.7" fill="none" stroke="#6e6e6e" stroke-width=".8"/><path d="M3.5 3.5q1.2-.9 .4-1.7-1.4-.6-2 .9" fill="none" stroke="#6e6e6e" stroke-width=".6"/>
</svg>
<div style="left:219.8px;top:382.35px;width:39.6px;height:6.3px;background:#1b1b1b;border-radius:1px;"></div>
<span style="left:222.00px;top:382px;font-size:5.3px;line-height:7px;color:#d4d4d4;letter-spacing:-0.218px;">None</span>
<svg style="left:253.5px;top:383.5px;" width="5" height="4" viewBox="0 0 5 4">
<path d="M1.2 1.3l1.3 1.3 1.3-1.3" fill="none" stroke="#a0a0a0" stroke-width=".9"/>
</svg>
<div style="left:15.7px;top:390.15px;width:5.5px;height:6.1px;background:#1f1f1f;"></div>
<div style="left:22.3px;top:390.15px;width:5.5px;height:6.1px;background:#1f1f1f;"></div>
<div style="left:174.7px;top:390.15px;width:5.6px;height:6.1px;background:#1f1f1f;"></div>
<div style="left:181.4px;top:390.15px;width:5.6px;height:6.1px;background:#1f1f1f;"></div>
<div style="left:188.1px;top:390.15px;width:5.6px;height:6.1px;background:#1f1f1f;"></div>
<svg style="left:1.8px;top:391.1px;" width="5.8" height="4.2" viewBox="0 0 7 5">
<path d="M.3 2.5Q3.5-.6 6.7 2.5Q3.5 5.6 .3 2.5z" fill="#c6c6c6"/><circle cx="3.5" cy="2.5" r="1.2" fill="#262626"/>
</svg>
<svg style="left:32.4px;top:390.7px;" width="4" height="5" viewBox="0 0 4 5">
<path d="M1.5 1.2L2.7 2.5 1.5 3.8" fill="none" stroke="#636363" stroke-width=".8"/>
</svg>
<div style="left:38.2px;top:390.6px;width:5.7px;height:5.2px;background:#6079dc;"></div>
<span style="left:47.95px;top:390px;font-size:5.2px;line-height:7px;color:#8c8c8c;">9</span>
<span style="left:62.15px;top:389px;font-size:6px;line-height:8px;color:#d0d0d0;font-family:"DejaVu Sans",sans-serif;">★</span>
<span style="left:70.20px;top:390px;font-size:5.3px;line-height:7px;color:#cfcfcf;letter-spacing:-0.114px;">Shape Layer 8</span>
<svg style="left:140.6px;top:390.6px;" width="6" height="5.2" viewBox="0 0 6 5.2">
<path d="M3 .3q1.3 0 1.3 1.4 0 .8 1.4 1.6v.6H.3v-.6q1.4-.8 1.4-1.6Q1.7.3 3 .3z" fill="#a6a6a6"/><path d="M2 4.5h2" stroke="#a6a6a6" stroke-width=".8"/>
</svg>
<svg style="left:147.2px;top:390.2px;" width="6" height="6" viewBox="0 0 6 6">
<path d="M3 .6l.7 1.7 1.7.7-1.7.7L3 5.4l-.7-1.7L.6 3l1.7-.7z" fill="#5a5a5a"/>
</svg>
<svg style="left:153.7px;top:389.7px;" width="7" height="7" viewBox="0 0 7 7">
<path d="M.9 6.1L6.1 .9" stroke="#c9c9c9" stroke-width=".9"/>
</svg>
<span style="left:161.00px;top:389px;font-size:6.6px;line-height:8px;color:#d0d0d0;font-style:italic;font-family:"Liberation Serif",serif;">fx</span>
<svg style="left:210.8px;top:389.7px;" width="7" height="7" viewBox="0 0 7 7">
<circle cx="3.5" cy="3.5" r="2.7" fill="none" stroke="#6e6e6e" stroke-width=".8"/><path d="M3.5 3.5q1.2-.9 .4-1.7-1.4-.6-2 .9" fill="none" stroke="#6e6e6e" stroke-width=".6"/>
</svg>
<div style="left:219.8px;top:390.05px;width:39.6px;height:6.3px;background:#1b1b1b;border-radius:1px;"></div>
<span style="left:222.00px;top:390px;font-size:5.3px;line-height:7px;color:#d4d4d4;letter-spacing:0.023px;font-weight:bold;">8. Null 48</span>
<svg style="left:253.5px;top:391.2px;" width="5" height="4" viewBox="0 0 5 4">
<path d="M1.2 1.3l1.3 1.3 1.3-1.3" fill="none" stroke="#a0a0a0" stroke-width=".9"/>
</svg>
<div style="left:15.7px;top:397.85px;width:5.5px;height:6.1px;background:#1f1f1f;"></div>
<div style="left:22.3px;top:397.85px;width:5.5px;height:6.1px;background:#1f1f1f;"></div>
<div style="left:174.7px;top:397.85px;width:5.6px;height:6.1px;background:#1f1f1f;"></div>
<div style="left:181.4px;top:397.85px;width:5.6px;height:6.1px;background:#1f1f1f;"></div>
<div style="left:188.1px;top:397.85px;width:5.6px;height:6.1px;background:#1f1f1f;"></div>
<svg style="left:1.8px;top:398.8px;" width="5.8" height="4.2" viewBox="0 0 7 5">
<path d="M.3 2.5Q3.5-.6 6.7 2.5Q3.5 5.6 .3 2.5z" fill="#c6c6c6"/><circle cx="3.5" cy="2.5" r="1.2" fill="#262626"/>
</svg>
<svg style="left:32.4px;top:398.4px;" width="4" height="5" viewBox="0 0 4 5">
<path d="M1.5 1.2L2.7 2.5 1.5 3.8" fill="none" stroke="#636363" stroke-width=".8"/>
</svg>
<div style="left:38.2px;top:398.3px;width:5.7px;height:5.2px;background:#6079dc;"></div>
<span style="left:46.51px;top:398px;font-size:5.2px;line-height:7px;color:#8c8c8c;">10</span>
<span style="left:62.15px;top:397px;font-size:6px;line-height:8px;color:#d0d0d0;font-family:"DejaVu Sans",sans-serif;">★</span>
<span style="left:70.20px;top:398px;font-size:5.3px;line-height:7px;color:#cfcfcf;letter-spacing:-0.114px;">Shape Layer 7</span>
<svg style="left:140.6px;top:398.3px;" width="6" height="5.2" viewBox="0 0 6 5.2">
<path d="M3 .3q1.3 0 1.3 1.4 0 .8 1.4 1.6v.6H.3v-.6q1.4-.8 1.4-1.6Q1.7.3 3 .3z" fill="#a6a6a6"/><path d="M2 4.5h2" stroke="#a6a6a6" stroke-width=".8"/>
</svg>
<svg style="left:147.2px;top:397.9px;" width="6" height="6" viewBox="0 0 6 6">
<path d="M3 .6l.7 1.7 1.7.7-1.7.7L3 5.4l-.7-1.7L.6 3l1.7-.7z" fill="#5a5a5a"/>
</svg>
<svg style="left:153.7px;top:397.4px;" width="7" height="7" viewBox="0 0 7 7">
<path d="M.9 6.1L6.1 .9" stroke="#c9c9c9" stroke-width=".9"/>
</svg>
<span style="left:161.00px;top:397px;font-size:6.6px;line-height:8px;color:#d0d0d0;font-style:italic;font-family:"Liberation Serif",serif;">fx</span>
<svg style="left:210.8px;top:397.4px;" width="7" height="7" viewBox="0 0 7 7">
<circle cx="3.5" cy="3.5" r="2.7" fill="none" stroke="#6e6e6e" stroke-width=".8"/><path d="M3.5 3.5q1.2-.9 .4-1.7-1.4-.6-2 .9" fill="none" stroke="#6e6e6e" stroke-width=".6"/>
</svg>
<div style="left:219.8px;top:397.75px;width:39.6px;height:6.3px;background:#1b1b1b;border-radius:1px;"></div>
<span style="left:222.00px;top:398px;font-size:5.3px;line-height:7px;color:#d4d4d4;letter-spacing:0.023px;font-weight:bold;">8. Null 48</span>
<svg style="left:253.5px;top:398.9px;" width="5" height="4" viewBox="0 0 5 4">
<path d="M1.2 1.3l1.3 1.3 1.3-1.3" fill="none" stroke="#a0a0a0" stroke-width=".9"/>
</svg>
<div style="left:15.7px;top:405.55px;width:5.5px;height:6.1px;background:#1f1f1f;"></div>
<div style="left:22.3px;top:405.55px;width:5.5px;height:6.1px;background:#1f1f1f;"></div>
<div style="left:174.7px;top:405.55px;width:5.6px;height:6.1px;background:#1f1f1f;"></div>
<div style="left:181.4px;top:405.55px;width:5.6px;height:6.1px;background:#1f1f1f;"></div>
<div style="left:188.1px;top:405.55px;width:5.6px;height:6.1px;background:#1f1f1f;"></div>
<svg style="left:1.8px;top:406.5px;" width="5.8" height="4.2" viewBox="0 0 7 5">
<path d="M.3 2.5Q3.5-.6 6.7 2.5Q3.5 5.6 .3 2.5z" fill="#c6c6c6"/><circle cx="3.5" cy="2.5" r="1.2" fill="#262626"/>
</svg>
<svg style="left:32.4px;top:406.1px;" width="4" height="5" viewBox="0 0 4 5">
<path d="M1.5 1.2L2.7 2.5 1.5 3.8" fill="none" stroke="#636363" stroke-width=".8"/>
</svg>
<div style="left:38.2px;top:406px;width:5.7px;height:5.2px;background:#6079dc;"></div>
<span style="left:46.70px;top:405px;font-size:5.2px;line-height:7px;color:#8c8c8c;">11</span>
<span style="left:62.15px;top:404px;font-size:6px;line-height:8px;color:#d0d0d0;font-family:"DejaVu Sans",sans-serif;">★</span>
<span style="left:70.20px;top:406px;font-size:5.3px;line-height:7px;color:#cfcfcf;letter-spacing:-0.114px;">Shape Layer 6</span>
<svg style="left:140.6px;top:406px;" width="6" height="5.2" viewBox="0 0 6 5.2">
<path d="M3 .3q1.3 0 1.3 1.4 0 .8 1.4 1.6v.6H.3v-.6q1.4-.8 1.4-1.6Q1.7.3 3 .3z" fill="#a6a6a6"/><path d="M2 4.5h2" stroke="#a6a6a6" stroke-width=".8"/>
</svg>
<svg style="left:147.2px;top:405.6px;" width="6" height="6" viewBox="0 0 6 6">
<path d="M3 .6l.7 1.7 1.7.7-1.7.7L3 5.4l-.7-1.7L.6 3l1.7-.7z" fill="#5a5a5a"/>
</svg>
<svg style="left:153.7px;top:405.1px;" width="7" height="7" viewBox="0 0 7 7">
<path d="M.9 6.1L6.1 .9" stroke="#c9c9c9" stroke-width=".9"/>
</svg>
<span style="left:161.00px;top:405px;font-size:6.6px;line-height:8px;color:#d0d0d0;font-style:italic;font-family:"Liberation Serif",serif;">fx</span>
<svg style="left:210.8px;top:405.1px;" width="7" height="7" viewBox="0 0 7 7">
<circle cx="3.5" cy="3.5" r="2.7" fill="none" stroke="#6e6e6e" stroke-width=".8"/><path d="M3.5 3.5q1.2-.9 .4-1.7-1.4-.6-2 .9" fill="none" stroke="#6e6e6e" stroke-width=".6"/>
</svg>
<div style="left:219.8px;top:405.45px;width:39.6px;height:6.3px;background:#1b1b1b;border-radius:1px;"></div>
<span style="left:222.00px;top:406px;font-size:5.3px;line-height:7px;color:#d4d4d4;letter-spacing:0.023px;font-weight:bold;">8. Null 48</span>
<svg style="left:253.5px;top:406.6px;" width="5" height="4" viewBox="0 0 5 4">
<path d="M1.2 1.3l1.3 1.3 1.3-1.3" fill="none" stroke="#a0a0a0" stroke-width=".9"/>
</svg>
<div style="left:15.7px;top:413.25px;width:5.5px;height:6.1px;background:#1f1f1f;"></div>
<div style="left:22.3px;top:413.25px;width:5.5px;height:6.1px;background:#1f1f1f;"></div>
<div style="left:174.7px;top:413.25px;width:5.6px;height:6.1px;background:#1f1f1f;"></div>
<div style="left:181.4px;top:413.25px;width:5.6px;height:6.1px;background:#1f1f1f;"></div>
<div style="left:188.1px;top:413.25px;width:5.6px;height:6.1px;background:#1f1f1f;"></div>
<svg style="left:1.8px;top:414.2px;" width="5.8" height="4.2" viewBox="0 0 7 5">
<path d="M.3 2.5Q3.5-.6 6.7 2.5Q3.5 5.6 .3 2.5z" fill="#c6c6c6"/><circle cx="3.5" cy="2.5" r="1.2" fill="#262626"/>
</svg>
<svg style="left:32.4px;top:413.8px;" width="4" height="5" viewBox="0 0 4 5">
<path d="M1.5 1.2L2.7 2.5 1.5 3.8" fill="none" stroke="#636363" stroke-width=".8"/>
</svg>
<div style="left:38.2px;top:413.7px;width:5.7px;height:5.2px;background:#6079dc;"></div>
<span style="left:46.51px;top:413px;font-size:5.2px;line-height:7px;color:#8c8c8c;">12</span>
<span style="left:62.15px;top:412px;font-size:6px;line-height:8px;color:#d0d0d0;font-family:"DejaVu Sans",sans-serif;">★</span>
<span style="left:70.20px;top:413px;font-size:5.3px;line-height:7px;color:#cfcfcf;letter-spacing:-0.114px;">Shape Layer 5</span>
<svg style="left:140.6px;top:413.7px;" width="6" height="5.2" viewBox="0 0 6 5.2">
<path d="M3 .3q1.3 0 1.3 1.4 0 .8 1.4 1.6v.6H.3v-.6q1.4-.8 1.4-1.6Q1.7.3 3 .3z" fill="#a6a6a6"/><path d="M2 4.5h2" stroke="#a6a6a6" stroke-width=".8"/>
</svg>
<svg style="left:147.2px;top:413.3px;" width="6" height="6" viewBox="0 0 6 6">
<path d="M3 .6l.7 1.7 1.7.7-1.7.7L3 5.4l-.7-1.7L.6 3l1.7-.7z" fill="#5a5a5a"/>
</svg>
<svg style="left:153.7px;top:412.8px;" width="7" height="7" viewBox="0 0 7 7">
<path d="M.9 6.1L6.1 .9" stroke="#c9c9c9" stroke-width=".9"/>
</svg>
<span style="left:161.00px;top:412px;font-size:6.6px;line-height:8px;color:#d0d0d0;font-style:italic;font-family:"Liberation Serif",serif;">fx</span>
<svg style="left:210.8px;top:412.8px;" width="7" height="7" viewBox="0 0 7 7">
<circle cx="3.5" cy="3.5" r="2.7" fill="none" stroke="#6e6e6e" stroke-width=".8"/><path d="M3.5 3.5q1.2-.9 .4-1.7-1.4-.6-2 .9" fill="none" stroke="#6e6e6e" stroke-width=".6"/>
</svg>
<div style="left:219.8px;top:413.15px;width:39.6px;height:6.3px;background:#1b1b1b;border-radius:1px;"></div>
<span style="left:222.00px;top:413px;font-size:5.3px;line-height:7px;color:#d4d4d4;letter-spacing:0.023px;font-weight:bold;">8. Null 48</span>
<svg style="left:253.5px;top:414.3px;" width="5" height="4" viewBox="0 0 5 4">
<path d="M1.2 1.3l1.3 1.3 1.3-1.3" fill="none" stroke="#a0a0a0" stroke-width=".9"/>
</svg>
<div style="left:15.7px;top:420.95px;width:5.5px;height:6.1px;background:#1f1f1f;"></div>
<div style="left:22.3px;top:420.95px;width:5.5px;height:6.1px;background:#1f1f1f;"></div>
<div style="left:174.7px;top:420.95px;width:5.6px;height:6.1px;background:#1f1f1f;"></div>
<div style="left:181.4px;top:420.95px;width:5.6px;height:6.1px;background:#1f1f1f;"></div>
<div style="left:188.1px;top:420.95px;width:5.6px;height:6.1px;background:#1f1f1f;"></div>
<svg style="left:1.8px;top:421.9px;" width="5.8" height="4.2" viewBox="0 0 7 5">
<path d="M.3 2.5Q3.5-.6 6.7 2.5Q3.5 5.6 .3 2.5z" fill="#c6c6c6"/><circle cx="3.5" cy="2.5" r="1.2" fill="#262626"/>
</svg>
<svg style="left:32.4px;top:421.5px;" width="4" height="5" viewBox="0 0 4 5">
<path d="M1.5 1.2L2.7 2.5 1.5 3.8" fill="none" stroke="#636363" stroke-width=".8"/>
</svg>
<div style="left:38.2px;top:421.4px;width:5.7px;height:5.2px;background:#6079dc;"></div>
<span style="left:46.51px;top:421px;font-size:5.2px;line-height:7px;color:#8c8c8c;">13</span>
<span style="left:62.15px;top:420px;font-size:6px;line-height:8px;color:#d0d0d0;font-family:"DejaVu Sans",sans-serif;">★</span>
<span style="left:70.20px;top:421px;font-size:5.3px;line-height:7px;color:#cfcfcf;letter-spacing:-0.114px;">Shape Layer 4</span>
<svg style="left:140.6px;top:421.4px;" width="6" height="5.2" viewBox="0 0 6 5.2">
<path d="M3 .3q1.3 0 1.3 1.4 0 .8 1.4 1.6v.6H.3v-.6q1.4-.8 1.4-1.6Q1.7.3 3 .3z" fill="#a6a6a6"/><path d="M2 4.5h2" stroke="#a6a6a6" stroke-width=".8"/>
</svg>
<svg style="left:147.2px;top:421px;" width="6" height="6" viewBox="0 0 6 6">
<path d="M3 .6l.7 1.7 1.7.7-1.7.7L3 5.4l-.7-1.7L.6 3l1.7-.7z" fill="#5a5a5a"/>
</svg>
<svg style="left:153.7px;top:420.5px;" width="7" height="7" viewBox="0 0 7 7">
<path d="M.9 6.1L6.1 .9" stroke="#c9c9c9" stroke-width=".9"/>
</svg>
<span style="left:161.00px;top:420px;font-size:6.6px;line-height:8px;color:#d0d0d0;font-style:italic;font-family:"Liberation Serif",serif;">fx</span>
<svg style="left:210.8px;top:420.5px;" width="7" height="7" viewBox="0 0 7 7">
<circle cx="3.5" cy="3.5" r="2.7" fill="none" stroke="#6e6e6e" stroke-width=".8"/><path d="M3.5 3.5q1.2-.9 .4-1.7-1.4-.6-2 .9" fill="none" stroke="#6e6e6e" stroke-width=".6"/>
</svg>
<div style="left:219.8px;top:420.85px;width:39.6px;height:6.3px;background:#1b1b1b;border-radius:1px;"></div>
<span style="left:222.00px;top:421px;font-size:5.3px;line-height:7px;color:#d4d4d4;letter-spacing:0.023px;font-weight:bold;">8. Null 48</span>
<svg style="left:253.5px;top:422px;" width="5" height="4" viewBox="0 0 5 4">
<path d="M1.2 1.3l1.3 1.3 1.3-1.3" fill="none" stroke="#a0a0a0" stroke-width=".9"/>
</svg>
<div style="left:15.7px;top:428.65px;width:5.5px;height:6.1px;background:#1f1f1f;"></div>
<div style="left:22.3px;top:428.65px;width:5.5px;height:6.1px;background:#1f1f1f;"></div>
<div style="left:174.7px;top:428.65px;width:5.6px;height:6.1px;background:#1f1f1f;"></div>
<div style="left:181.4px;top:428.65px;width:5.6px;height:6.1px;background:#1f1f1f;"></div>
<div style="left:188.1px;top:428.65px;width:5.6px;height:6.1px;background:#1f1f1f;"></div>
<svg style="left:1.8px;top:429.6px;" width="5.8" height="4.2" viewBox="0 0 7 5">
<path d="M.3 2.5Q3.5-.6 6.7 2.5Q3.5 5.6 .3 2.5z" fill="#c6c6c6"/><circle cx="3.5" cy="2.5" r="1.2" fill="#262626"/>
</svg>
<svg style="left:32.4px;top:429.2px;" width="4" height="5" viewBox="0 0 4 5">
<path d="M1.5 1.2L2.7 2.5 1.5 3.8" fill="none" stroke="#636363" stroke-width=".8"/>
</svg>
<div style="left:38.2px;top:429.1px;width:5.7px;height:5.2px;background:#6079dc;"></div>
<span style="left:46.51px;top:429px;font-size:5.2px;line-height:7px;color:#8c8c8c;">14</span>
<span style="left:62.15px;top:428px;font-size:6px;line-height:8px;color:#d0d0d0;font-family:"DejaVu Sans",sans-serif;">★</span>
<span style="left:70.20px;top:429px;font-size:5.3px;line-height:7px;color:#cfcfcf;letter-spacing:-0.114px;">Shape Layer 2</span>
<svg style="left:140.6px;top:429.1px;" width="6" height="5.2" viewBox="0 0 6 5.2">
<path d="M3 .3q1.3 0 1.3 1.4 0 .8 1.4 1.6v.6H.3v-.6q1.4-.8 1.4-1.6Q1.7.3 3 .3z" fill="#a6a6a6"/><path d="M2 4.5h2" stroke="#a6a6a6" stroke-width=".8"/>
</svg>
<svg style="left:147.2px;top:428.7px;" width="6" height="6" viewBox="0 0 6 6">
<path d="M3 .6l.7 1.7 1.7.7-1.7.7L3 5.4l-.7-1.7L.6 3l1.7-.7z" fill="#5a5a5a"/>
</svg>
<svg style="left:153.7px;top:428.2px;" width="7" height="7" viewBox="0 0 7 7">
<path d="M.9 6.1L6.1 .9" stroke="#c9c9c9" stroke-width=".9"/>
</svg>
<span style="left:161.00px;top:428px;font-size:6.6px;line-height:8px;color:#d0d0d0;font-style:italic;font-family:"Liberation Serif",serif;">fx</span>
<svg style="left:210.8px;top:428.2px;" width="7" height="7" viewBox="0 0 7 7">
<circle cx="3.5" cy="3.5" r="2.7" fill="none" stroke="#6e6e6e" stroke-width=".8"/><path d="M3.5 3.5q1.2-.9 .4-1.7-1.4-.6-2 .9" fill="none" stroke="#6e6e6e" stroke-width=".6"/>
</svg>
<div style="left:219.8px;top:428.55px;width:39.6px;height:6.3px;background:#1b1b1b;border-radius:1px;"></div>
<span style="left:222.00px;top:429px;font-size:5.3px;line-height:7px;color:#d4d4d4;letter-spacing:0.023px;font-weight:bold;">8. Null 48</span>
<svg style="left:253.5px;top:429.7px;" width="5" height="4" viewBox="0 0 5 4">
<path d="M1.2 1.3l1.3 1.3 1.3-1.3" fill="none" stroke="#a0a0a0" stroke-width=".9"/>
</svg>
<div style="left:15.7px;top:436.35px;width:5.5px;height:6.1px;background:#1f1f1f;"></div>
<div style="left:22.3px;top:436.35px;width:5.5px;height:6.1px;background:#1f1f1f;"></div>
<div style="left:174.7px;top:436.35px;width:5.6px;height:6.1px;background:#1f1f1f;"></div>
<div style="left:181.4px;top:436.35px;width:5.6px;height:6.1px;background:#1f1f1f;"></div>
<div style="left:188.1px;top:436.35px;width:5.6px;height:6.1px;background:#1f1f1f;"></div>
<svg style="left:1.8px;top:437.3px;" width="5.8" height="4.2" viewBox="0 0 7 5">
<path d="M.3 2.5Q3.5-.6 6.7 2.5Q3.5 5.6 .3 2.5z" fill="#c6c6c6"/><circle cx="3.5" cy="2.5" r="1.2" fill="#262626"/>
</svg>
<svg style="left:32.4px;top:436.9px;" width="4" height="5" viewBox="0 0 4 5">
<path d="M1.5 1.2L2.7 2.5 1.5 3.8" fill="none" stroke="#636363" stroke-width=".8"/>
</svg>
<div style="left:38.2px;top:436.8px;width:5.7px;height:5.2px;background:#6079dc;"></div>
<span style="left:46.51px;top:436px;font-size:5.2px;line-height:7px;color:#8c8c8c;">15</span>
<span style="left:62.15px;top:435px;font-size:6px;line-height:8px;color:#d0d0d0;font-family:"DejaVu Sans",sans-serif;">★</span>
<span style="left:70.20px;top:436px;font-size:5.3px;line-height:7px;color:#cfcfcf;letter-spacing:-0.114px;">Shape Layer 3</span>
<svg style="left:140.6px;top:436.8px;" width="6" height="5.2" viewBox="0 0 6 5.2">
<path d="M3 .3q1.3 0 1.3 1.4 0 .8 1.4 1.6v.6H.3v-.6q1.4-.8 1.4-1.6Q1.7.3 3 .3z" fill="#a6a6a6"/><path d="M2 4.5h2" stroke="#a6a6a6" stroke-width=".8"/>
</svg>
<svg style="left:147.2px;top:436.4px;" width="6" height="6" viewBox="0 0 6 6">
<path d="M3 .6l.7 1.7 1.7.7-1.7.7L3 5.4l-.7-1.7L.6 3l1.7-.7z" fill="#5a5a5a"/>
</svg>
<svg style="left:153.7px;top:435.9px;" width="7" height="7" viewBox="0 0 7 7">
<path d="M.9 6.1L6.1 .9" stroke="#c9c9c9" stroke-width=".9"/>
</svg>
<span style="left:161.00px;top:436px;font-size:6.6px;line-height:8px;color:#d0d0d0;font-style:italic;font-family:"Liberation Serif",serif;">fx</span>
<svg style="left:210.8px;top:435.9px;" width="7" height="7" viewBox="0 0 7 7">
<circle cx="3.5" cy="3.5" r="2.7" fill="none" stroke="#6e6e6e" stroke-width=".8"/><path d="M3.5 3.5q1.2-.9 .4-1.7-1.4-.6-2 .9" fill="none" stroke="#6e6e6e" stroke-width=".6"/>
</svg>
<div style="left:219.8px;top:436.25px;width:39.6px;height:6.3px;background:#1b1b1b;border-radius:1px;"></div>
<span style="left:222.00px;top:436px;font-size:5.3px;line-height:7px;color:#d4d4d4;letter-spacing:0.023px;font-weight:bold;">8. Null 48</span>
<svg style="left:253.5px;top:437.4px;" width="5" height="4" viewBox="0 0 5 4">
<path d="M1.2 1.3l1.3 1.3 1.3-1.3" fill="none" stroke="#a0a0a0" stroke-width=".9"/>
</svg>
<div style="left:15.7px;top:444.05px;width:5.5px;height:6.1px;background:#1f1f1f;"></div>
<div style="left:22.3px;top:444.05px;width:5.5px;height:6.1px;background:#1f1f1f;"></div>
<div style="left:174.7px;top:444.05px;width:5.6px;height:6.1px;background:#1f1f1f;"></div>
<div style="left:181.4px;top:444.05px;width:5.6px;height:6.1px;background:#1f1f1f;"></div>
<div style="left:188.1px;top:444.05px;width:5.6px;height:6.1px;background:#1f1f1f;"></div>
<svg style="left:1.8px;top:445px;" width="5.8" height="4.2" viewBox="0 0 7 5">
<path d="M.3 2.5Q3.5-.6 6.7 2.5Q3.5 5.6 .3 2.5z" fill="#c6c6c6"/><circle cx="3.5" cy="2.5" r="1.2" fill="#262626"/>
</svg>
<svg style="left:32.4px;top:444.6px;" width="4" height="5" viewBox="0 0 4 5">
<path d="M1.5 1.2L2.7 2.5 1.5 3.8" fill="none" stroke="#636363" stroke-width=".8"/>
</svg>
<div style="left:38.2px;top:444.5px;width:5.7px;height:5.2px;background:#6079dc;"></div>
<span style="left:46.51px;top:444px;font-size:5.2px;line-height:7px;color:#8c8c8c;">16</span>
<span style="left:62.15px;top:443px;font-size:6px;line-height:8px;color:#d0d0d0;font-family:"DejaVu Sans",sans-serif;">★</span>
<span style="left:70.20px;top:444px;font-size:5.3px;line-height:7px;color:#cfcfcf;letter-spacing:-0.114px;">Shape Layer 1</span>
<svg style="left:140.6px;top:444.5px;" width="6" height="5.2" viewBox="0 0 6 5.2">
<path d="M3 .3q1.3 0 1.3 1.4 0 .8 1.4 1.6v.6H.3v-.6q1.4-.8 1.4-1.6Q1.7.3 3 .3z" fill="#a6a6a6"/><path d="M2 4.5h2" stroke="#a6a6a6" stroke-width=".8"/>
</svg>
<svg style="left:147.2px;top:444.1px;" width="6" height="6" viewBox="0 0 6 6">
<path d="M3 .6l.7 1.7 1.7.7-1.7.7L3 5.4l-.7-1.7L.6 3l1.7-.7z" fill="#5a5a5a"/>
</svg>
<svg style="left:153.7px;top:443.6px;" width="7" height="7" viewBox="0 0 7 7">
<path d="M.9 6.1L6.1 .9" stroke="#c9c9c9" stroke-width=".9"/>
</svg>
<span style="left:161.00px;top:443px;font-size:6.6px;line-height:8px;color:#d0d0d0;font-style:italic;font-family:"Liberation Serif",serif;">fx</span>
<svg style="left:210.8px;top:443.6px;" width="7" height="7" viewBox="0 0 7 7">
<circle cx="3.5" cy="3.5" r="2.7" fill="none" stroke="#6e6e6e" stroke-width=".8"/><path d="M3.5 3.5q1.2-.9 .4-1.7-1.4-.6-2 .9" fill="none" stroke="#6e6e6e" stroke-width=".6"/>
</svg>
<div style="left:219.8px;top:443.95px;width:39.6px;height:6.3px;background:#1b1b1b;border-radius:1px;"></div>
<span style="left:222.00px;top:444px;font-size:5.3px;line-height:7px;color:#d4d4d4;letter-spacing:0.023px;font-weight:bold;">8. Null 48</span>
<svg style="left:253.5px;top:445.1px;" width="5" height="4" viewBox="0 0 5 4">
<path d="M1.2 1.3l1.3 1.3 1.3-1.3" fill="none" stroke="#a0a0a0" stroke-width=".9"/>
</svg>
<div style="left:15.7px;top:451.75px;width:5.5px;height:6.1px;background:#1f1f1f;"></div>
<div style="left:22.3px;top:451.75px;width:5.5px;height:6.1px;background:#1f1f1f;"></div>
<div style="left:174.7px;top:451.75px;width:5.6px;height:6.1px;background:#1f1f1f;"></div>
<div style="left:181.4px;top:451.75px;width:5.6px;height:6.1px;background:#1f1f1f;"></div>
<div style="left:188.1px;top:451.75px;width:5.6px;height:6.1px;background:#1f1f1f;"></div>
<svg style="left:1.8px;top:452.7px;" width="5.8" height="4.2" viewBox="0 0 7 5">
<path d="M.3 2.5Q3.5-.6 6.7 2.5Q3.5 5.6 .3 2.5z" fill="#c6c6c6"/><circle cx="3.5" cy="2.5" r="1.2" fill="#262626"/>
</svg>
<svg style="left:32.4px;top:452.3px;" width="4" height="5" viewBox="0 0 4 5">
<path d="M1.5 1.2L2.7 2.5 1.5 3.8" fill="none" stroke="#636363" stroke-width=".8"/>
</svg>
<div style="left:38.2px;top:452.2px;width:5.7px;height:5.2px;background:#c0443c;"></div>
<span style="left:46.51px;top:452px;font-size:5.2px;line-height:7px;color:#8c8c8c;">17</span>
<div style="left:61.2px;top:452px;width:6.2px;height:5.6px;background:#ffffff;"></div>
<span style="left:70.20px;top:452px;font-size:5.3px;line-height:7px;color:#cfcfcf;letter-spacing:0.055px;">[White Solid 1]</span>
<svg style="left:140.6px;top:452.2px;" width="6" height="5.2" viewBox="0 0 6 5.2">
<path d="M3 .3q1.3 0 1.3 1.4 0 .8 1.4 1.6v.6H.3v-.6q1.4-.8 1.4-1.6Q1.7.3 3 .3z" fill="#a6a6a6"/><path d="M2 4.5h2" stroke="#a6a6a6" stroke-width=".8"/>
</svg>
<svg style="left:153.7px;top:451.3px;" width="7" height="7" viewBox="0 0 7 7">
<path d="M.9 6.1L6.1 .9" stroke="#c9c9c9" stroke-width=".9"/>
</svg>
<span style="left:161.00px;top:451px;font-size:6.6px;line-height:8px;color:#d0d0d0;font-style:italic;font-family:"Liberation Serif",serif;">fx</span>
<svg style="left:210.8px;top:451.3px;" width="7" height="7" viewBox="0 0 7 7">
<circle cx="3.5" cy="3.5" r="2.7" fill="none" stroke="#6e6e6e" stroke-width=".8"/><path d="M3.5 3.5q1.2-.9 .4-1.7-1.4-.6-2 .9" fill="none" stroke="#6e6e6e" stroke-width=".6"/>
</svg>
<div style="left:219.8px;top:451.65px;width:39.6px;height:6.3px;background:#1b1b1b;border-radius:1px;"></div>
<span style="left:222.00px;top:452px;font-size:5.3px;line-height:7px;color:#d4d4d4;letter-spacing:-0.218px;">None</span>
<svg style="left:253.5px;top:452.8px;" width="5" height="4" viewBox="0 0 5 4">
<path d="M1.2 1.3l1.3 1.3 1.3-1.3" fill="none" stroke="#a0a0a0" stroke-width=".9"/>
</svg>
<div style="left:270.4px;top:304.6px;width:629.6px;height:1.6px;background:#1e1e1e;"></div>
<div style="left:270.4px;top:306.1px;width:629.6px;height:3.1px;background:#676767;"></div>
<div style="left:270.4px;top:309.2px;width:629.6px;height:10px;background:#1d1d1d;"></div>
<div style="left:270.4px;top:319.2px;width:629.6px;height:6.5px;background:#575757;"></div>
<div style="left:270.4px;top:325.7px;width:629.6px;height:2.2px;background:#1e1e1e;"></div>
<div style="left:270.4px;top:305.8px;width:2.6px;height:3.6px;background:#3f8fe8;border-radius:1.5px 0 0 1.5px;"></div>
<div style="left:270.4px;top:319.2px;width:2px;height:6.5px;background:#4c9af0;border-radius:1px;"></div>
<div style="left:272.3px;top:316.2px;width:0.8px;height:1.4px;background:#8c8c8c;"></div>
<span style="left:272.20px;top:311px;font-size:4.6px;line-height:6px;color:#9a9a9a;letter-spacing:-0.072px;">00s</span>
<div style="left:320.3px;top:316.2px;width:0.8px;height:1.4px;background:#8c8c8c;"></div>
<span style="left:316.80px;top:311px;font-size:4.6px;line-height:6px;color:#9a9a9a;letter-spacing:-0.072px;">01s</span>
<div style="left:368.3px;top:316.2px;width:0.8px;height:1.4px;background:#8c8c8c;"></div>
<span style="left:364.80px;top:311px;font-size:4.6px;line-height:6px;color:#9a9a9a;letter-spacing:-0.072px;">02s</span>
<div style="left:416.3px;top:316.2px;width:0.8px;height:1.4px;background:#8c8c8c;"></div>
<span style="left:412.80px;top:311px;font-size:4.6px;line-height:6px;color:#9a9a9a;letter-spacing:-0.072px;">03s</span>
<div style="left:464.3px;top:316.2px;width:0.8px;height:1.4px;background:#8c8c8c;"></div>
<span style="left:460.80px;top:311px;font-size:4.6px;line-height:6px;color:#9a9a9a;letter-spacing:-0.072px;">04s</span>
<div style="left:512.3px;top:316.2px;width:0.8px;height:1.4px;background:#8c8c8c;"></div>
<span style="left:508.80px;top:311px;font-size:4.6px;line-height:6px;color:#9a9a9a;letter-spacing:-0.072px;">05s</span>
<div style="left:560.3px;top:316.2px;width:0.8px;height:1.4px;background:#8c8c8c;"></div>
<span style="left:556.80px;top:311px;font-size:4.6px;line-height:6px;color:#9a9a9a;letter-spacing:-0.072px;">06s</span>
<div style="left:608.3px;top:316.2px;width:0.8px;height:1.4px;background:#8c8c8c;"></div>
<span style="left:604.80px;top:311px;font-size:4.6px;line-height:6px;color:#9a9a9a;letter-spacing:-0.072px;">07s</span>
<div style="left:656.3px;top:316.2px;width:0.8px;height:1.4px;background:#8c8c8c;"></div>
<span style="left:652.80px;top:311px;font-size:4.6px;line-height:6px;color:#9a9a9a;letter-spacing:-0.072px;">08s</span>
<div style="left:704.3px;top:316.2px;width:0.8px;height:1.4px;background:#8c8c8c;"></div>
<span style="left:700.80px;top:311px;font-size:4.6px;line-height:6px;color:#9a9a9a;letter-spacing:-0.072px;">09s</span>
<div style="left:752.3px;top:316.2px;width:0.8px;height:1.4px;background:#8c8c8c;"></div>
<span style="left:748.80px;top:311px;font-size:4.6px;line-height:6px;color:#9a9a9a;letter-spacing:-0.072px;">10s</span>
<div style="left:800.3px;top:316.2px;width:0.8px;height:1.4px;background:#8c8c8c;"></div>
<span style="left:796.80px;top:311px;font-size:4.6px;line-height:6px;color:#9a9a9a;letter-spacing:0.042px;">11s</span>
<div style="left:848.3px;top:316.2px;width:0.8px;height:1.4px;background:#8c8c8c;"></div>
<span style="left:844.80px;top:311px;font-size:4.6px;line-height:6px;color:#9a9a9a;letter-spacing:-0.072px;">12s</span>
<div style="left:896.3px;top:316.2px;width:0.8px;height:1.4px;background:#8c8c8c;"></div>
<span style="left:892.80px;top:311px;font-size:4.6px;line-height:6px;color:#9a9a9a;letter-spacing:-0.072px;">13s</span>
<div style="left:272.3px;top:327.9px;width:627.7px;height:131px;background:#373737;"></div>
<div style="left:270.4px;top:327.9px;width:1.9px;height:131px;background:#202020;"></div>
<div style="left:270.4px;top:458.9px;width:629.6px;height:47.1px;background:#2c2c2c;"></div>
<div style="left:272.3px;top:327.9px;width:627.7px;height:7px;background:#4d4d4d;"></div>
<div style="left:337.4px;top:327.9px;width:483px;height:7px;background:#b29e7a;border-radius:1.5px;"></div>
<div style="left:338.4px;top:327.9px;width:481px;height:1.2px;background:#c2af8a;"></div>
<div style="left:272.3px;top:334.6px;width:627.7px;height:1px;background:rgba(10,10,18,.28);"></div>
<div style="left:272.6px;top:335.7px;width:627.4px;height:6.7px;background:#a1973a;"></div>
<div style="left:272.3px;top:342.3px;width:627.7px;height:1px;background:rgba(10,10,18,.28);"></div>
<div style="left:448.8px;top:343.4px;width:451.2px;height:6.7px;background:#786d5b;border-radius:1px 0 0 1px;"></div>
<div style="left:272.3px;top:350px;width:627.7px;height:1px;background:rgba(10,10,18,.28);"></div>
<div style="left:416.6px;top:351.1px;width:483.4px;height:6.7px;background:#786d5b;border-radius:1px 0 0 1px;"></div>
<div style="left:272.3px;top:357.7px;width:627.7px;height:1px;background:rgba(10,10,18,.28);"></div>
<div style="left:393.4px;top:358.8px;width:506.6px;height:6.7px;background:#786d5b;border-radius:1px 0 0 1px;"></div>
<div style="left:272.3px;top:365.4px;width:627.7px;height:1px;background:rgba(10,10,18,.28);"></div>
<div style="left:370.2px;top:366.5px;width:529.8px;height:6.7px;background:#786d5b;border-radius:1px 0 0 1px;"></div>
<div style="left:272.3px;top:373.1px;width:627.7px;height:1px;background:rgba(10,10,18,.28);"></div>
<div style="left:272.6px;top:374.2px;width:96px;height:6.7px;background:#857a69;"></div>
<div style="left:272.3px;top:380.8px;width:627.7px;height:1px;background:rgba(10,10,18,.28);"></div>
<div style="left:272.6px;top:381.9px;width:627.4px;height:6.7px;background:#873a3a;"></div>
<div style="left:272.3px;top:388.5px;width:627.7px;height:1px;background:rgba(10,10,18,.28);"></div>
<div style="left:272.6px;top:389.6px;width:627.4px;height:6.7px;background:#485893;"></div>
<div style="left:272.3px;top:396.2px;width:627.7px;height:1px;background:rgba(10,10,18,.28);"></div>
<div style="left:272.6px;top:397.3px;width:627.4px;height:6.7px;background:#485893;"></div>
<div style="left:272.3px;top:403.9px;width:627.7px;height:1px;background:rgba(10,10,18,.28);"></div>
<div style="left:272.6px;top:405px;width:627.4px;height:6.7px;background:#485893;"></div>
<div style="left:272.3px;top:411.6px;width:627.7px;height:1px;background:rgba(10,10,18,.28);"></div>
<div style="left:272.6px;top:412.7px;width:627.4px;height:6.7px;background:#485893;"></div>
<div style="left:272.3px;top:419.3px;width:627.7px;height:1px;background:rgba(10,10,18,.28);"></div>
<div style="left:272.6px;top:420.4px;width:627.4px;height:6.7px;background:#485893;"></div>
<div style="left:272.3px;top:427px;width:627.7px;height:1px;background:rgba(10,10,18,.28);"></div>
<div style="left:272.6px;top:428.1px;width:627.4px;height:6.7px;background:#485893;"></div>
<div style="left:272.3px;top:434.7px;width:627.7px;height:1px;background:rgba(10,10,18,.28);"></div>
<div style="left:272.6px;top:435.8px;width:627.4px;height:6.7px;background:#485893;"></div>
<div style="left:272.3px;top:442.4px;width:627.7px;height:1px;background:rgba(10,10,18,.28);"></div>
<div style="left:272.6px;top:443.5px;width:627.4px;height:6.7px;background:#485893;"></div>
<div style="left:272.3px;top:450.1px;width:627.7px;height:1px;background:rgba(10,10,18,.28);"></div>
<div style="left:272.6px;top:451.2px;width:627.4px;height:6.7px;background:#873a3a;"></div>
<div style="left:272.3px;top:457.8px;width:627.7px;height:1px;background:rgba(10,10,18,.28);"></div>
<div style="left:500.9px;top:306px;width:1px;height:200px;background:rgba(96,158,230,.62);"></div>
<svg style="left:497.9px;top:311.4px;" width="7" height="7" viewBox="0 0 7 7">
<path d="M.6 .4h5.8v3.4L3.5 6.6.6 3.8z" fill="#4a90e8"/><path d="M3.5 2.2v3" stroke="#cfe2fa" stroke-width=".7"/>
</svg>
<div style="left:500.4px;top:306px;width:2px;height:3.2px;background:#9cc2ee;"></div>
<div style="left:486px;top:0px;width:1px;height:289px;background:#161616;"></div>
<div style="left:487px;top:0px;width:413px;height:289.3px;background:#232323;"></div>
<span style="left:492.80px;top:0px;font-size:5.6px;line-height:7px;color:#c8c8c8;letter-spacing:-0.269px;">Premium Builder Motion Pack</span>
<span style="left:563.50px;top:0px;font-size:5.5px;line-height:7px;color:#9c9c9c;">≡</span>
<svg style="left:490.2px;top:14px;" width="10.6" height="9.6" viewBox="0 0 10.6 9.6">
<g fill="#e6342a"><path d="M5.3 0L10.4 2.3 5.3 4.6 .2 2.3z"/><path d="M.2 3.5L5.3 5.8l5.1-2.3v1.9L5.3 7.7.2 5.4z"/><path d="M.2 6.5l5.1 2.3 5.1-2.3v1L5.3 9.6.2 7.5z"/></g>
</svg>
<span style="left:504.80px;top:14px;font-size:8.9px;line-height:11px;color:#ffffff;letter-spacing:-0.628px;font-weight:bold;font-style:italic;">Premium Builder</span>
<span style="left:568.60px;top:15px;font-size:3.6px;line-height:5px;color:#aaaaaa;">™</span>
<div style="left:541.4px;top:30.4px;width:358.6px;height:11.8px;background:#1b1b1b;"></div>
<div style="left:490px;top:32px;width:17.8px;height:8.6px;background:#4c4c4c;border-radius:4.3px;"></div>
<div style="left:499px;top:33.1px;width:6.4px;height:6.4px;border-radius:4px;background:#969696"></div>
<svg style="left:512.5px;top:31.5px;" width="9" height="9" viewBox="0 0 9 9">
<path d="M4.5 .8L8.6 4.6H7.4V8.2H5.4V5.6H3.6V8.2H1.6V4.6H.4z" fill="#b9b9b9"/>
</svg>
<svg style="left:526.4px;top:32.1px;" width="8.4" height="8.4" viewBox="0 0 8.4 8.4">
<polygon points="4.20,0.00 5.24,2.77 8.19,2.90 5.88,4.75 6.67,7.60 4.20,5.96 1.73,7.60 2.52,4.75 0.21,2.90 3.16,2.77" fill="#b9b9b9"/>
</svg>
<svg style="left:544.2px;top:32.4px;" width="8" height="8" viewBox="0 0 9 9">
<circle cx="3.6" cy="3.6" r="2.4" fill="none" stroke="#d0d0d0" stroke-width="1.2"/><path d="M5.4 5.4L8 8" stroke="#d0d0d0" stroke-width="1.3"/>
</svg>
<span style="left:558.40px;top:33px;font-size:5.4px;line-height:7px;color:#5c5c5c;letter-spacing:-0.012px;">Search...</span>
<div style="left:487.8px;top:44.8px;width:86.6px;height:232.6px;background:#282828;"></div>
<div style="left:487.8px;top:57.75px;width:86.6px;height:0.8px;background:#222222;"></div>
<span style="left:491.00px;top:48px;font-size:6px;line-height:8px;color:#b6b6b6;letter-spacing:-0.284px;">01. Openers</span>
<div style="left:487.8px;top:69.95px;width:86.6px;height:0.8px;background:#222222;"></div>
<span style="left:491.00px;top:60px;font-size:6px;line-height:8px;color:#b6b6b6;letter-spacing:-0.261px;">02. Typography</span>
<div style="left:487.8px;top:82.15px;width:86.6px;height:0.8px;background:#222222;"></div>
<span style="left:491.00px;top:73px;font-size:6px;line-height:8px;color:#b6b6b6;letter-spacing:-0.250px;">03. Infographics</span>
<div style="left:487.8px;top:82.95px;width:86.6px;height:11.4px;background:#3a3a3a;"></div>
<div style="left:487.8px;top:94.35px;width:86.6px;height:0.8px;background:#222222;"></div>
<span style="left:498.70px;top:85px;font-size:6px;line-height:8px;color:#b2b2b2;letter-spacing:-0.229px;">Charts</span>
<div style="left:487.8px;top:106.55px;width:86.6px;height:0.8px;background:#222222;"></div>
<span style="left:498.70px;top:97px;font-size:6px;line-height:8px;color:#b6b6b6;letter-spacing:-0.317px;">Icon Graphs</span>
<div style="left:487.8px;top:118.75px;width:86.6px;height:0.8px;background:#222222;"></div>
<span style="left:498.70px;top:109px;font-size:6px;line-height:8px;color:#b6b6b6;letter-spacing:-0.308px;">Icons</span>
<div style="left:487.8px;top:119.55px;width:86.6px;height:11.4px;background:#969696;"></div>
<div style="left:487.8px;top:130.95px;width:86.6px;height:0.8px;background:#222222;"></div>
<span style="left:498.70px;top:121px;font-size:6px;line-height:8px;color:#1c1c1c;letter-spacing:-0.296px;">Info Labels</span>
<div style="left:487.8px;top:143.15px;width:86.6px;height:0.8px;background:#222222;"></div>
<span style="left:498.70px;top:134px;font-size:6px;line-height:8px;color:#b6b6b6;letter-spacing:-0.291px;">Infographics</span>
<div style="left:487.8px;top:155.35px;width:86.6px;height:0.8px;background:#222222;"></div>
<span style="left:498.70px;top:146px;font-size:6px;line-height:8px;color:#b6b6b6;letter-spacing:-0.343px;">Maps</span>
<div style="left:487.8px;top:167.55px;width:86.6px;height:0.8px;background:#222222;"></div>
<span style="left:498.70px;top:158px;font-size:6px;line-height:8px;color:#b6b6b6;letter-spacing:-0.309px;">Proccess</span>
<div style="left:487.8px;top:179.75px;width:86.6px;height:0.8px;background:#222222;"></div>
<span style="left:498.70px;top:170px;font-size:6px;line-height:8px;color:#b6b6b6;letter-spacing:-0.338px;">Services</span>
<div style="left:487.8px;top:191.95px;width:86.6px;height:0.8px;background:#222222;"></div>
<span style="left:498.70px;top:182px;font-size:6px;line-height:8px;color:#b6b6b6;letter-spacing:-0.279px;">Social Media</span>
<div style="left:487.8px;top:204.15px;width:86.6px;height:0.8px;background:#222222;"></div>
<span style="left:498.70px;top:195px;font-size:6px;line-height:8px;color:#b6b6b6;letter-spacing:-0.291px;">Tables</span>
<div style="left:487.8px;top:216.35px;width:86.6px;height:0.8px;background:#222222;"></div>
<span style="left:498.70px;top:207px;font-size:6px;line-height:8px;color:#b6b6b6;letter-spacing:-0.331px;">Timeline</span>
<div style="left:487.8px;top:228.55px;width:86.6px;height:0.8px;background:#222222;"></div>
<span style="left:491.00px;top:219px;font-size:6px;line-height:8px;color:#b6b6b6;letter-spacing:-0.253px;">04. Design Concepts</span>
<div style="left:487.8px;top:240.75px;width:86.6px;height:0.8px;background:#222222;"></div>
<span style="left:491.00px;top:231px;font-size:6px;line-height:8px;color:#b6b6b6;letter-spacing:-0.241px;">05. Devices</span>
<div style="left:487.8px;top:252.95px;width:86.6px;height:0.8px;background:#222222;"></div>
<span style="left:491.00px;top:243px;font-size:6px;line-height:8px;color:#b6b6b6;letter-spacing:-0.295px;">06. Hands</span>
<div style="left:487.8px;top:265.15px;width:86.6px;height:0.8px;background:#222222;"></div>
<span style="left:491.00px;top:256px;font-size:6px;line-height:8px;color:#b6b6b6;letter-spacing:-0.239px;">07. Icon Words</span>
<div style="left:487.8px;top:277.35px;width:86.6px;height:0.8px;background:#222222;"></div>
<span style="left:491.00px;top:268px;font-size:6px;line-height:8px;color:#b6b6b6;letter-spacing:-0.187px;">08. Flat Icons</span>
<div style="left:574.4px;top:44.8px;width:5.8px;height:232.6px;background:#262626;"></div>
<div style="left:575px;top:45.5px;width:4.4px;height:171.5px;background:#383838;border-radius:1px;"></div>
<div style="left:487.8px;top:277.4px;width:412.2px;height:11px;background:#1f1f1f;"></div>
<span style="left:490.00px;top:279px;font-size:5.2px;line-height:7px;color:#bababa;letter-spacing:-0.339px;">Designed and developed by</span>
<span style="left:548.00px;top:278px;font-size:6px;line-height:8px;color:#ffffff;letter-spacing:-0.865px;font-weight:bold;font-style:italic;font-family:"Liberation Serif",serif;">Premiumilk.</span>
<svg style="left:823.8px;top:279.6px;" width="7" height="6" viewBox="0 0 7 6">
<rect x="0" y="0" width="7" height="6" fill="#9a9a9a"/><path d="M0 2h7M0 4h7" stroke="#555" stroke-width=".5"/>
</svg>
<div style="left:835px;top:282.2px;width:55.5px;height:1px;background:#151515;"></div>
<div style="left:859.6px;top:279.9px;width:5.4px;height:5.4px;border-radius:3px;background:#d8d8d8"></div>
<svg style="left:894px;top:279.6px;" width="6" height="6" viewBox="0 0 6 6">
<rect x="0" y="0" width="2.6" height="2.6" fill="#d8d8d8"/><rect x="3.4" y="0" width="2.6" height="2.6" fill="#d8d8d8"/><rect x="0" y="3.4" width="2.6" height="2.6" fill="#d8d8d8"/><rect x="3.4" y="3.4" width="2.6" height="2.6" fill="#d8d8d8"/>
</svg>
<div style="left:580.5px;top:45.7px;width:76px;height:52.8px;background:#292929;"></div>
<svg style="left:606px;top:54px;" width="26" height="24" viewBox="606 54 26 24">
<path d="M611.4 67.400L618.9 59.900L626.4 67.400" fill="none" stroke="#9a9a9a" stroke-width="4.2" stroke-linecap="round" stroke-linejoin="round"/><path d="M618.9 61V73.600" stroke="#9a9a9a" stroke-width="4.4" stroke-linecap="round"/>
</svg>
<span style="left:612.50px;top:90px;font-size:5.8px;line-height:7px;color:#c2c2c2;letter-spacing:-0.224px;">Back</span>
<div style="left:657.95px;top:45.7px;width:76px;height:42.5px;background:#000000;"></div>
<div style="left:657.95px;top:88.2px;width:76px;height:10.3px;background:#2b2b2b;"></div>
<span style="left:678.75px;top:90px;font-size:5.8px;line-height:7px;color:#c2c2c2;letter-spacing:-0.203px;">Info_Labels_1</span>
<svg style="left:725.65px;top:89.85px;" width="7" height="7" viewBox="0 0 7 7">
<polygon points="3.50,0.00 4.36,2.31 6.83,2.42 4.90,3.95 5.56,6.33 3.50,4.97 1.44,6.33 2.10,3.95 0.17,2.42 2.64,2.31" fill="#a0a0a0"/>
</svg>
<div style="left:735.4px;top:45.7px;width:76px;height:42.5px;background:#000000;"></div>
<div style="left:735.4px;top:88.2px;width:76px;height:10.3px;background:#2b2b2b;"></div>
<span style="left:756.20px;top:90px;font-size:5.8px;line-height:7px;color:#c2c2c2;letter-spacing:-0.203px;">Info_Labels_2</span>
<svg style="left:803.1px;top:89.85px;" width="7" height="7" viewBox="0 0 7 7">
<polygon points="3.50,0.00 4.36,2.31 6.83,2.42 4.90,3.95 5.56,6.33 3.50,4.97 1.44,6.33 2.10,3.95 0.17,2.42 2.64,2.31" fill="#a0a0a0"/>
</svg>
<div style="left:812.85px;top:45.7px;width:76px;height:42.5px;background:#000000;"></div>
<div style="left:812.85px;top:88.2px;width:76px;height:10.3px;background:#2b2b2b;"></div>
<span style="left:833.65px;top:90px;font-size:5.8px;line-height:7px;color:#c2c2c2;letter-spacing:-0.203px;">Info_Labels_3</span>
<svg style="left:880.55px;top:89.85px;" width="7" height="7" viewBox="0 0 7 7">
<polygon points="3.50,0.00 4.36,2.31 6.83,2.42 4.90,3.95 5.56,6.33 3.50,4.97 1.44,6.33 2.10,3.95 0.17,2.42 2.64,2.31" fill="#a0a0a0"/>
</svg>
<div style="left:580.5px;top:99.75px;width:76px;height:42.5px;background:#000000;"></div>
<div style="left:580.5px;top:142.25px;width:76px;height:10.3px;background:#2b2b2b;"></div>
<span style="left:601.30px;top:144px;font-size:5.8px;line-height:7px;color:#c2c2c2;letter-spacing:-0.203px;">Info_Labels_4</span>
<svg style="left:648.2px;top:143.9px;" width="7" height="7" viewBox="0 0 7 7">
<polygon points="3.50,0.00 4.36,2.31 6.83,2.42 4.90,3.95 5.56,6.33 3.50,4.97 1.44,6.33 2.10,3.95 0.17,2.42 2.64,2.31" fill="#a0a0a0"/>
</svg>
<div style="left:657.95px;top:99.75px;width:76px;height:42.5px;background:#000000;"></div>
<div style="left:657.95px;top:142.25px;width:76px;height:10.3px;background:#2b2b2b;"></div>
<span style="left:678.75px;top:144px;font-size:5.8px;line-height:7px;color:#c2c2c2;letter-spacing:-0.203px;">Info_Labels_5</span>
<svg style="left:725.65px;top:143.9px;" width="7" height="7" viewBox="0 0 7 7">
<polygon points="3.50,0.00 4.36,2.31 6.83,2.42 4.90,3.95 5.56,6.33 3.50,4.97 1.44,6.33 2.10,3.95 0.17,2.42 2.64,2.31" fill="#a0a0a0"/>
</svg>
<div style="left:735.4px;top:99.75px;width:76px;height:42.5px;background:#000000;"></div>
<div style="left:735.4px;top:142.25px;width:76px;height:10.3px;background:#2b2b2b;"></div>
<span style="left:756.20px;top:144px;font-size:5.8px;line-height:7px;color:#c2c2c2;letter-spacing:-0.203px;">Info_Labels_6</span>
<svg style="left:803.1px;top:143.9px;" width="7" height="7" viewBox="0 0 7 7">
<polygon points="3.50,0.00 4.36,2.31 6.83,2.42 4.90,3.95 5.56,6.33 3.50,4.97 1.44,6.33 2.10,3.95 0.17,2.42 2.64,2.31" fill="#a0a0a0"/>
</svg>
<div style="left:812.85px;top:99.75px;width:76px;height:42.5px;background:#000000;"></div>
<div style="left:812.85px;top:142.25px;width:76px;height:10.3px;background:#2b2b2b;"></div>
<span style="left:833.65px;top:144px;font-size:5.8px;line-height:7px;color:#c2c2c2;letter-spacing:-0.203px;">Info_Labels_7</span>
<svg style="left:880.55px;top:143.9px;" width="7" height="7" viewBox="0 0 7 7">
<polygon points="3.50,0.00 4.36,2.31 6.83,2.42 4.90,3.95 5.56,6.33 3.50,4.97 1.44,6.33 2.10,3.95 0.17,2.42 2.64,2.31" fill="#a0a0a0"/>
</svg>
<div style="left:580.5px;top:153.8px;width:76px;height:42.5px;background:#000000;"></div>
<div style="left:580.5px;top:196.3px;width:76px;height:10.3px;background:#2b2b2b;"></div>
<span style="left:601.30px;top:199px;font-size:5.8px;line-height:7px;color:#c2c2c2;letter-spacing:-0.203px;">Info_Labels_8</span>
<svg style="left:648.2px;top:197.95px;" width="7" height="7" viewBox="0 0 7 7">
<polygon points="3.50,0.00 4.36,2.31 6.83,2.42 4.90,3.95 5.56,6.33 3.50,4.97 1.44,6.33 2.10,3.95 0.17,2.42 2.64,2.31" fill="#a0a0a0"/>
</svg>
<div style="left:657.95px;top:153.8px;width:76px;height:42.5px;background:#000000;"></div>
<div style="left:657.95px;top:196.3px;width:76px;height:10.3px;background:#2b2b2b;"></div>
<span style="left:678.75px;top:199px;font-size:5.8px;line-height:7px;color:#c2c2c2;letter-spacing:-0.203px;">Info_Labels_9</span>
<svg style="left:725.65px;top:197.95px;" width="7" height="7" viewBox="0 0 7 7">
<polygon points="3.50,0.00 4.36,2.31 6.83,2.42 4.90,3.95 5.56,6.33 3.50,4.97 1.44,6.33 2.10,3.95 0.17,2.42 2.64,2.31" fill="#a0a0a0"/>
</svg>
<div style="left:735.4px;top:153.8px;width:76px;height:42.5px;background:#000000;"></div>
<div style="left:735.4px;top:196.3px;width:76px;height:10.3px;background:#2b2b2b;"></div>
<span style="left:754.80px;top:199px;font-size:5.8px;line-height:7px;color:#c2c2c2;letter-spacing:-0.219px;">Info_Labels_10</span>
<svg style="left:803.1px;top:197.95px;" width="7" height="7" viewBox="0 0 7 7">
<polygon points="3.50,0.00 4.36,2.31 6.83,2.42 4.90,3.95 5.56,6.33 3.50,4.97 1.44,6.33 2.10,3.95 0.17,2.42 2.64,2.31" fill="#a0a0a0"/>
</svg>
<div style="left:812.85px;top:153.8px;width:76px;height:42.5px;background:#000000;"></div>
<div style="left:812.85px;top:196.3px;width:76px;height:10.3px;background:#2b2b2b;"></div>
<span style="left:832.25px;top:199px;font-size:5.8px;line-height:7px;color:#c2c2c2;letter-spacing:-0.188px;">Info_Labels_11</span>
<svg style="left:880.55px;top:197.95px;" width="7" height="7" viewBox="0 0 7 7">
<polygon points="3.50,0.00 4.36,2.31 6.83,2.42 4.90,3.95 5.56,6.33 3.50,4.97 1.44,6.33 2.10,3.95 0.17,2.42 2.64,2.31" fill="#a0a0a0"/>
</svg>
<div style="left:580.5px;top:207.85px;width:76px;height:42.5px;background:#000000;"></div>
<div style="left:580.5px;top:250.35px;width:76px;height:10.3px;background:#262626;"></div>
<span style="left:599.90px;top:253px;font-size:5.8px;line-height:7px;color:#c2c2c2;letter-spacing:-0.219px;">Info_Labels_12</span>
<svg style="left:648.2px;top:252px;" width="7" height="7" viewBox="0 0 7 7">
<polygon points="3.50,0.00 4.36,2.31 6.83,2.42 4.90,3.95 5.56,6.33 3.50,4.97 1.44,6.33 2.10,3.95 0.17,2.42 2.64,2.31" fill="#a0a0a0"/>
</svg>
<div style="left:889.6px;top:44.8px;width:10.4px;height:232.6px;background:#252525;"></div>
<div style="left:893px;top:44.8px;width:0.8px;height:232.6px;background:#202020;"></div>
<div style="left:678.3px;top:59.3px;width:35px;height:1px;background:#b84452;"></div>
<div style="left:763px;top:54.5px;width:20.4px;height:1.8px;background:#d0384a;"></div>
<div style="left:766px;top:55px;width:14px;height:0.8px;background:#f08a94;"></div>
<div style="left:836.5px;top:52.5px;width:27px;height:5.8px;background:#dd4254;"></div>
<div style="left:839.5px;top:53.5px;width:2.4px;height:3.8px;background:#f5d0d4;"></div>
<div style="left:844px;top:54.6px;width:17px;height:1.4px;background:#e8707c;"></div>
<div style="left:586.2px;top:116.1px;width:6px;height:6px;border-radius:3px;background:#e8485a"></div>
<div style="left:593.5px;top:117.2px;width:4px;height:1px;background:#b0b0b0;"></div>
<div style="left:593.5px;top:119.6px;width:9px;height:0.8px;background:#4a4a4a;"></div>
<div style="left:664.6px;top:108.7px;width:5px;height:5px;border-radius:3px;background:#e8485a"></div>
<div style="left:671px;top:109.6px;width:4px;height:0.9px;background:#909090;"></div>
<div style="left:671px;top:112px;width:30px;height:0.7px;background:#3a2a2e;"></div>
<div style="left:751px;top:109.5px;width:5px;height:3.5px;background:#5a1a22;"></div>
<div style="left:750px;top:115px;width:6px;height:1.2px;background:#8a8a8a;"></div>
<div style="left:746px;top:117.6px;width:14px;height:0.7px;background:#3c3c3c;"></div>
<div style="left:823.8px;top:109.6px;width:6.4px;height:6.4px;border-radius:4px;background:#e8405a"></div>
<div style="left:825.4px;top:112.4px;width:3.2px;height:0.9px;background:#f5c0c8;"></div>
<div style="left:820.5px;top:118.2px;width:13px;height:0.8px;background:#4a3a3e;"></div>
<div style="left:580.5px;top:169.8px;width:22px;height:0.9px;background:#a83848;"></div>
<div style="left:601.8px;top:168px;width:0.9px;height:2.4px;background:#a83848;"></div>
<div style="left:673.7px;top:161.8px;width:7.4px;height:7.5px;background:#f0505f;"></div>
<div style="left:758px;top:158.3px;width:21.4px;height:8.2px;background:#e84a58;"></div>
<div style="left:758.8px;top:158.3px;width:1px;height:8.2px;background:#f5a0a8;"></div>
<svg style="left:832px;top:161px;" width="25" height="8.4" viewBox="0 0 25 8.4">
<path d="M2 0H24.4L22.4 8H0z" fill="#5a5a5a"/><path d="M2 0H17.6L15.6 8H0z" fill="#e8485a"/>
</svg>
<svg style="left:610px;top:236.5px;" width="8" height="13.8" viewBox="0 0 8 13.8">
<path d="M1.6 1.6Q4.9 1.4 4.9 3.6V14.5" fill="none" stroke="#e0507a" stroke-width="1.5"/>
</svg>
<div style="left:487px;top:-2px;width:420px;height:291.6px;border:1.4px solid #25496f;box-sizing:border-box;background:none"></div>
<svg style="left:509.4px;top:80.2px;" width="6.6" height="8" viewBox="0 0 9 11">
<path d="M2.2 1.2q.9-.6 1.5.3l1.1 2.6 2.6.9q.9.5.7 1.5L7.6 9.6H3.4L1 6.4q-.4-.9.5-1.1l1.3.7z" fill="#ffffff" stroke="#222" stroke-width=".6"/>
</svg>
</div></body></html>
